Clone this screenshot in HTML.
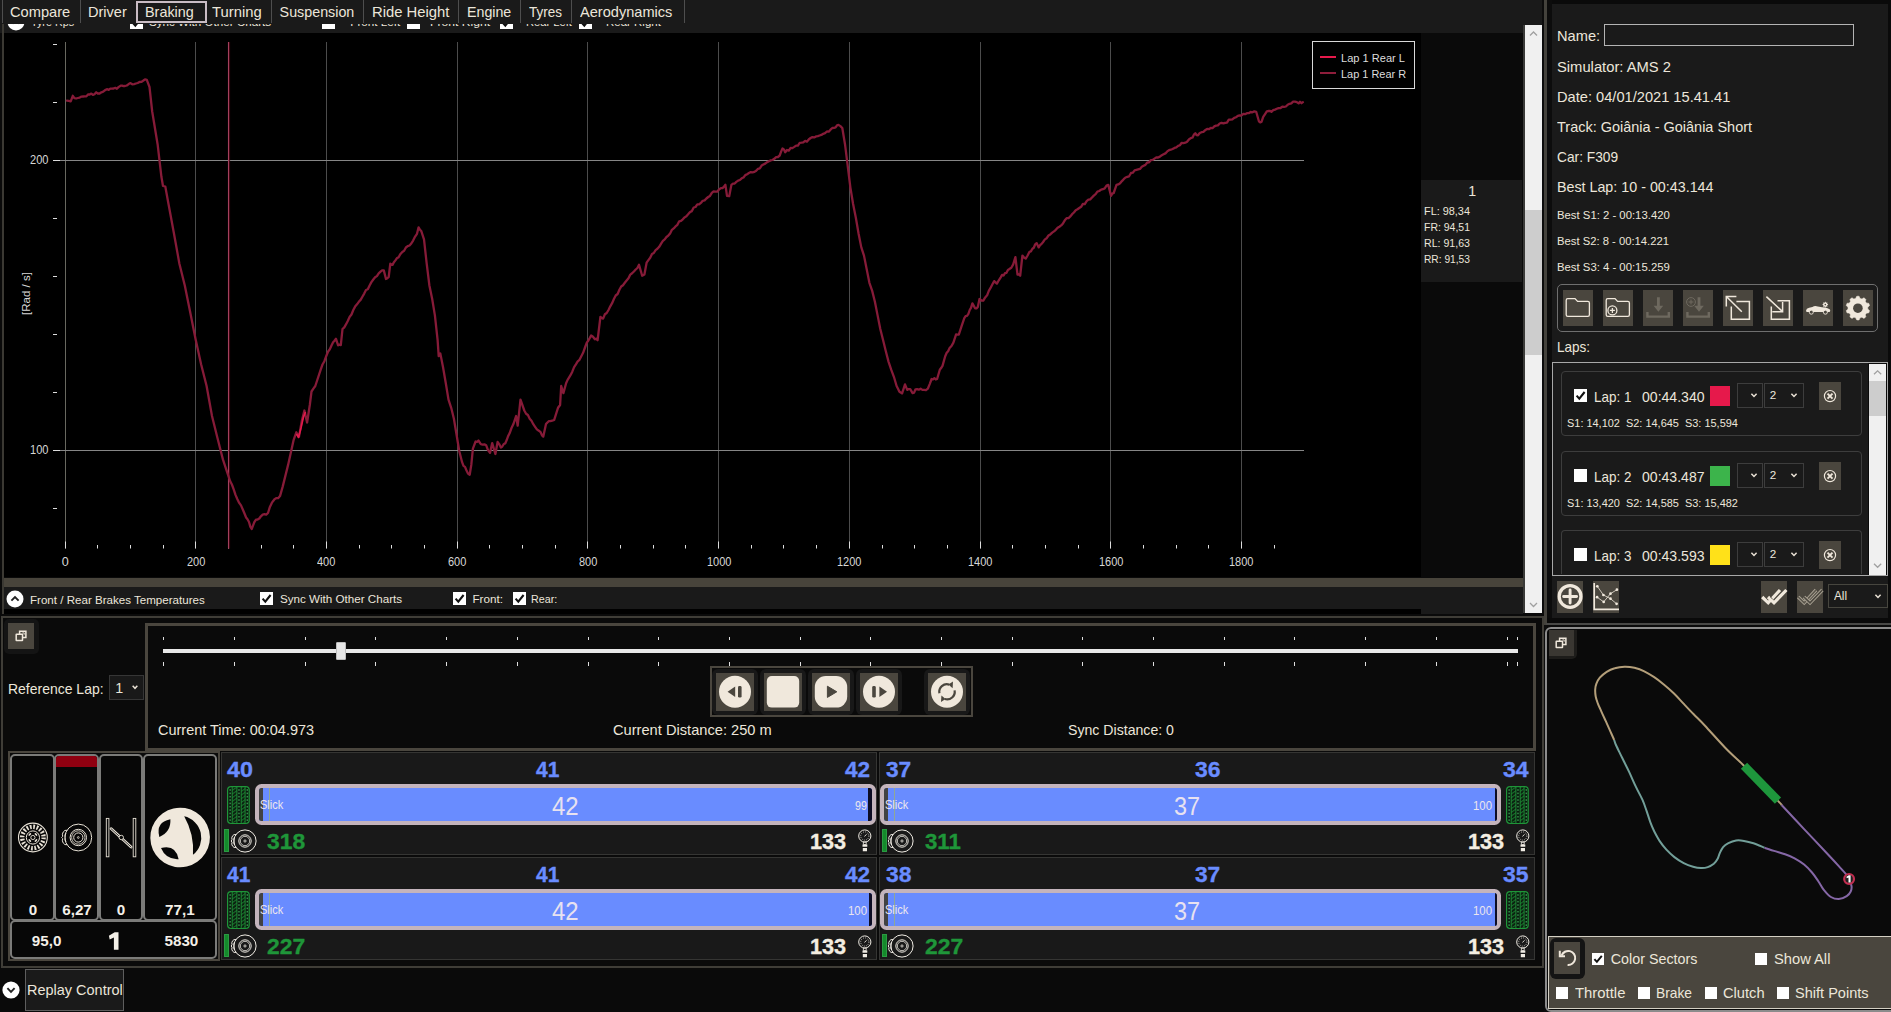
<!DOCTYPE html>
<html><head><meta charset="utf-8"><title>Telemetry</title>
<style>
html,body{margin:0;padding:0;background:#0a0a0a;}
body{width:1891px;height:1012px;position:relative;overflow:hidden;font-family:"Liberation Sans",sans-serif;}
.a{position:absolute;box-sizing:border-box;}
.t{position:absolute;white-space:pre;line-height:1;transform-origin:0 0;}
svg{overflow:visible;}
</style></head><body>
<div class="a" style="left:0.00px;top:0.00px;width:1544.00px;height:33.00px;background:#1a1a1a;"></div>
<div class="a" style="left:4.00px;top:24.30px;width:1518.00px;height:8.70px;overflow:hidden;"><div class="a" style="left:-4px;top:-1.3px"><svg class="a" style="left:5.50px;top:-11.50px;" width="20" height="20" viewBox="-10 -10 20 20"><circle cx="0" cy="0" r="8.5" fill="#fff"/><path d="M-3.6 1.6 L0 -2 L3.6 1.6" fill="none" stroke="#222" stroke-width="1.9"/></svg><span class="t" style="left:30.50px;top:-6.71px;font-size:11.70px;color:#ece6da;transform:scaleX(0.9209);">Tyre Rps</span><div class="a" style="left:129.50px;top:-7.50px;width:13.00px;height:13.00px;background:#fff;"><svg width="13" height="13" viewBox="0 0 13 13" style="position:absolute;left:0;top:0"><path d="M2.6 6.6 L5.3 9.6 L10.6 3" fill="none" stroke="#111" stroke-width="2.1"/></svg></div><span class="t" style="left:148.80px;top:-6.71px;font-size:11.70px;color:#ece6da;transform:scaleX(0.9942);">Sync With Other Charts</span><div class="a" style="left:322.30px;top:-7.50px;width:13.00px;height:13.00px;background:#fff;"></div><span class="t" style="left:350.30px;top:-6.71px;font-size:11.70px;color:#ece6da;">Front Left</span><div class="a" style="left:406.60px;top:-7.50px;width:13.00px;height:13.00px;background:#fff;"></div><span class="t" style="left:429.80px;top:-6.71px;font-size:11.70px;color:#ece6da;transform:scaleX(1.0405);">Front Right</span><div class="a" style="left:500.00px;top:-7.50px;width:13.00px;height:13.00px;background:#fff;"><svg width="13" height="13" viewBox="0 0 13 13" style="position:absolute;left:0;top:0"><path d="M2.6 6.6 L5.3 9.6 L10.6 3" fill="none" stroke="#111" stroke-width="2.1"/></svg></div><span class="t" style="left:526.00px;top:-6.71px;font-size:11.70px;color:#ece6da;transform:scaleX(0.9554);">Rear Left</span><div class="a" style="left:579.00px;top:-7.50px;width:13.00px;height:13.00px;background:#fff;"><svg width="13" height="13" viewBox="0 0 13 13" style="position:absolute;left:0;top:0"><path d="M2.6 6.6 L5.3 9.6 L10.6 3" fill="none" stroke="#111" stroke-width="2.1"/></svg></div><span class="t" style="left:605.50px;top:-6.71px;font-size:11.70px;color:#ece6da;transform:scaleX(0.9817);">Rear Right</span></div></div>
<span class="t" style="left:10.20px;top:4.99px;font-size:14.30px;color:#ece6da;transform:scaleX(1.0230);">Compare</span>
<span class="t" style="left:88.20px;top:4.99px;font-size:14.30px;color:#ece6da;transform:scaleX(1.0181);">Driver</span>
<span class="t" style="left:144.70px;top:4.99px;font-size:14.30px;color:#ece6da;transform:scaleX(1.0067);">Braking</span>
<span class="t" style="left:211.80px;top:4.99px;font-size:14.30px;color:#ece6da;transform:scaleX(1.0359);">Turning</span>
<span class="t" style="left:279.60px;top:4.99px;font-size:14.30px;color:#ece6da;">Suspension</span>
<span class="t" style="left:371.50px;top:4.99px;font-size:14.30px;color:#ece6da;transform:scaleX(1.0372);">Ride Height</span>
<span class="t" style="left:466.70px;top:4.99px;font-size:14.30px;color:#ece6da;transform:scaleX(0.9945);">Engine</span>
<span class="t" style="left:528.50px;top:4.99px;font-size:14.30px;color:#ece6da;transform:scaleX(0.9438);">Tyres</span>
<span class="t" style="left:579.60px;top:4.99px;font-size:14.30px;color:#ece6da;transform:scaleX(1.0200);">Aerodynamics</span>
<div class="a" style="left:2.30px;top:0.00px;width:1.00px;height:22.50px;background:#4e4e4e;"></div>
<div class="a" style="left:80.10px;top:0.00px;width:1.00px;height:22.50px;background:#4e4e4e;"></div>
<div class="a" style="left:271.00px;top:0.00px;width:1.00px;height:22.50px;background:#4e4e4e;"></div>
<div class="a" style="left:363.20px;top:0.00px;width:1.00px;height:22.50px;background:#4e4e4e;"></div>
<div class="a" style="left:458.00px;top:0.00px;width:1.00px;height:22.50px;background:#4e4e4e;"></div>
<div class="a" style="left:519.50px;top:0.00px;width:1.00px;height:22.50px;background:#4e4e4e;"></div>
<div class="a" style="left:571.00px;top:0.00px;width:1.00px;height:22.50px;background:#4e4e4e;"></div>
<div class="a" style="left:683.90px;top:0.00px;width:1.00px;height:22.50px;background:#4e4e4e;"></div>
<div class="a" style="left:136.00px;top:0.50px;width:70.50px;height:22.00px;border:2px solid #c9bcc4;box-sizing:border-box;"></div>
<div class="a" style="left:2.00px;top:24.00px;width:2.20px;height:592.00px;background:#3b3933;"></div>
<div class="a" style="left:1522.80px;top:25.00px;width:2.00px;height:588.00px;background:#3a3a38;"></div>
<div class="a" style="left:1524.80px;top:25.00px;width:17.20px;height:588.00px;background:#f0f0f0;"></div>
<div class="a" style="left:1524.80px;top:210.00px;width:17.20px;height:145.00px;background:#cdcdcd;"></div>
<svg class="a" style="left:1525.00px;top:25.00px;" width="17" height="17" viewBox="0 0 17 17"><path d="M5 10.5 L8.5 7 L12 10.5" fill="none" stroke="#a0a0a0" stroke-width="1.3"/></svg>
<svg class="a" style="left:1525.00px;top:596.00px;" width="17" height="17" viewBox="0 0 17 17"><path d="M5 7 L8.5 10.5 L12 7" fill="none" stroke="#a0a0a0" stroke-width="1.3"/></svg>
<div class="a" style="left:4.00px;top:577.60px;width:1519.00px;height:9.40px;background:#48443b;"></div>
<div class="a" style="left:4.00px;top:587.00px;width:1519.00px;height:22.00px;background:#1a1a1a;"></div>
<div class="a" style="left:4.00px;top:609.00px;width:1417.30px;height:4.50px;background:#000;"></div>
<div class="a" style="left:1421.30px;top:609.00px;width:102.00px;height:4.50px;background:#1a1a1a;"></div>
<svg class="a" style="left:5.40px;top:588.70px;" width="20" height="20" viewBox="-10 -10 20 20"><circle cx="0" cy="0" r="8.5" fill="#fff"/><path d="M-3.6 1.6 L0 -2 L3.6 1.6" fill="none" stroke="#222" stroke-width="1.9"/></svg>
<span class="t" style="left:29.50px;top:593.69px;font-size:11.70px;color:#ece6da;transform:scaleX(0.9900);">Front / Rear Brakes Temperatures</span>
<div class="a" style="left:260.40px;top:592.20px;width:13.00px;height:13.00px;background:#fff;"><svg width="13" height="13" viewBox="0 0 13 13" style="position:absolute;left:0;top:0"><path d="M2.6 6.6 L5.3 9.6 L10.6 3" fill="none" stroke="#111" stroke-width="2.1"/></svg></div>
<span class="t" style="left:279.80px;top:592.89px;font-size:11.70px;color:#ece6da;transform:scaleX(0.9942);">Sync With Other Charts</span>
<div class="a" style="left:453.40px;top:592.20px;width:13.00px;height:13.00px;background:#fff;"><svg width="13" height="13" viewBox="0 0 13 13" style="position:absolute;left:0;top:0"><path d="M2.6 6.6 L5.3 9.6 L10.6 3" fill="none" stroke="#111" stroke-width="2.1"/></svg></div>
<span class="t" style="left:472.40px;top:592.89px;font-size:11.70px;color:#ece6da;">Front:</span>
<div class="a" style="left:512.60px;top:592.20px;width:13.00px;height:13.00px;background:#fff;"><svg width="13" height="13" viewBox="0 0 13 13" style="position:absolute;left:0;top:0"><path d="M2.6 6.6 L5.3 9.6 L10.6 3" fill="none" stroke="#111" stroke-width="2.1"/></svg></div>
<span class="t" style="left:531.40px;top:592.89px;font-size:11.70px;color:#ece6da;transform:scaleX(0.9159);">Rear:</span>
<div class="a" style="left:1542.00px;top:0.00px;width:10.00px;height:1012.00px;background:#0c0c0c;"></div>
<div class="a" style="left:1544.40px;top:0.00px;width:2.60px;height:625.00px;background:#44423c;"></div>
<div class="a" style="left:4.00px;top:33.00px;width:1417.30px;height:544.00px;background:#000;"></div>
<div class="a" style="left:1421.30px;top:33.00px;width:102.00px;height:544.00px;background:#0a0a0a;"></div>
<div class="a" style="left:1421.30px;top:180.00px;width:101.00px;height:102.00px;background:#1a1a1a;"></div>
<span class="t" style="left:1468.36px;top:184.28px;font-size:14.20px;color:#ece6da;">1</span>
<span class="t" style="left:1423.60px;top:205.29px;font-size:11.70px;color:#ece6da;transform:scaleX(0.9306);">FL: 98,34</span>
<span class="t" style="left:1423.60px;top:221.29px;font-size:11.70px;color:#ece6da;transform:scaleX(0.8956);">FR: 94,51</span>
<span class="t" style="left:1423.60px;top:237.29px;font-size:11.70px;color:#ece6da;transform:scaleX(0.9069);">RL: 91,63</span>
<span class="t" style="left:1423.60px;top:253.29px;font-size:11.70px;color:#ece6da;transform:scaleX(0.8727);">RR: 91,53</span>
<svg class="a" style="left:0.00px;top:0.00px;" width="1430" height="580" viewBox="0 0 1430 580"><line x1="65.5" y1="42" x2="65.5" y2="548.5" stroke="#68685f" stroke-width="1"/><line x1="195.5" y1="42" x2="195.5" y2="548.5" stroke="#4c4c4c" stroke-width="1"/><line x1="326.5" y1="42" x2="326.5" y2="548.5" stroke="#4c4c4c" stroke-width="1"/><line x1="457.5" y1="42" x2="457.5" y2="548.5" stroke="#4c4c4c" stroke-width="1"/><line x1="587.5" y1="42" x2="587.5" y2="548.5" stroke="#4c4c4c" stroke-width="1"/><line x1="718.5" y1="42" x2="718.5" y2="548.5" stroke="#4c4c4c" stroke-width="1"/><line x1="849.5" y1="42" x2="849.5" y2="548.5" stroke="#4c4c4c" stroke-width="1"/><line x1="980.5" y1="42" x2="980.5" y2="548.5" stroke="#4c4c4c" stroke-width="1"/><line x1="1110.5" y1="42" x2="1110.5" y2="548.5" stroke="#4c4c4c" stroke-width="1"/><line x1="1241.5" y1="42" x2="1241.5" y2="548.5" stroke="#4c4c4c" stroke-width="1"/><line x1="97.5" y1="545" x2="97.5" y2="548.5" stroke="#ddd" stroke-width="1"/><line x1="130.5" y1="545" x2="130.5" y2="548.5" stroke="#ddd" stroke-width="1"/><line x1="163.5" y1="545" x2="163.5" y2="548.5" stroke="#ddd" stroke-width="1"/><line x1="228.5" y1="545" x2="228.5" y2="548.5" stroke="#ddd" stroke-width="1"/><line x1="261.5" y1="545" x2="261.5" y2="548.5" stroke="#ddd" stroke-width="1"/><line x1="293.5" y1="545" x2="293.5" y2="548.5" stroke="#ddd" stroke-width="1"/><line x1="359.5" y1="545" x2="359.5" y2="548.5" stroke="#ddd" stroke-width="1"/><line x1="391.5" y1="545" x2="391.5" y2="548.5" stroke="#ddd" stroke-width="1"/><line x1="424.5" y1="545" x2="424.5" y2="548.5" stroke="#ddd" stroke-width="1"/><line x1="489.5" y1="545" x2="489.5" y2="548.5" stroke="#ddd" stroke-width="1"/><line x1="522.5" y1="545" x2="522.5" y2="548.5" stroke="#ddd" stroke-width="1"/><line x1="555.5" y1="545" x2="555.5" y2="548.5" stroke="#ddd" stroke-width="1"/><line x1="620.5" y1="545" x2="620.5" y2="548.5" stroke="#ddd" stroke-width="1"/><line x1="653.5" y1="545" x2="653.5" y2="548.5" stroke="#ddd" stroke-width="1"/><line x1="685.5" y1="545" x2="685.5" y2="548.5" stroke="#ddd" stroke-width="1"/><line x1="751.5" y1="545" x2="751.5" y2="548.5" stroke="#ddd" stroke-width="1"/><line x1="783.5" y1="545" x2="783.5" y2="548.5" stroke="#ddd" stroke-width="1"/><line x1="816.5" y1="545" x2="816.5" y2="548.5" stroke="#ddd" stroke-width="1"/><line x1="882.5" y1="545" x2="882.5" y2="548.5" stroke="#ddd" stroke-width="1"/><line x1="914.5" y1="545" x2="914.5" y2="548.5" stroke="#ddd" stroke-width="1"/><line x1="947.5" y1="545" x2="947.5" y2="548.5" stroke="#ddd" stroke-width="1"/><line x1="1012.5" y1="545" x2="1012.5" y2="548.5" stroke="#ddd" stroke-width="1"/><line x1="1045.5" y1="545" x2="1045.5" y2="548.5" stroke="#ddd" stroke-width="1"/><line x1="1078.5" y1="545" x2="1078.5" y2="548.5" stroke="#ddd" stroke-width="1"/><line x1="1143.5" y1="545" x2="1143.5" y2="548.5" stroke="#ddd" stroke-width="1"/><line x1="1176.5" y1="545" x2="1176.5" y2="548.5" stroke="#ddd" stroke-width="1"/><line x1="1208.5" y1="545" x2="1208.5" y2="548.5" stroke="#ddd" stroke-width="1"/><line x1="1274.5" y1="545" x2="1274.5" y2="548.5" stroke="#ddd" stroke-width="1"/><line x1="65.5" y1="541.5" x2="65.5" y2="548.5" stroke="#ddd" stroke-width="1"/><line x1="195.5" y1="541.5" x2="195.5" y2="548.5" stroke="#ddd" stroke-width="1"/><line x1="326.5" y1="541.5" x2="326.5" y2="548.5" stroke="#ddd" stroke-width="1"/><line x1="457.5" y1="541.5" x2="457.5" y2="548.5" stroke="#ddd" stroke-width="1"/><line x1="587.5" y1="541.5" x2="587.5" y2="548.5" stroke="#ddd" stroke-width="1"/><line x1="718.5" y1="541.5" x2="718.5" y2="548.5" stroke="#ddd" stroke-width="1"/><line x1="849.5" y1="541.5" x2="849.5" y2="548.5" stroke="#ddd" stroke-width="1"/><line x1="980.5" y1="541.5" x2="980.5" y2="548.5" stroke="#ddd" stroke-width="1"/><line x1="1110.5" y1="541.5" x2="1110.5" y2="548.5" stroke="#ddd" stroke-width="1"/><line x1="1241.5" y1="541.5" x2="1241.5" y2="548.5" stroke="#ddd" stroke-width="1"/><line x1="53" y1="450.5" x2="1304" y2="450.5" stroke="#868686" stroke-width="1"/><line x1="53" y1="450.5" x2="60" y2="450.5" stroke="#ddd" stroke-width="1"/><line x1="53" y1="160.5" x2="1304" y2="160.5" stroke="#868686" stroke-width="1"/><line x1="53" y1="160.5" x2="60" y2="160.5" stroke="#ddd" stroke-width="1"/><line x1="53" y1="508.5" x2="57" y2="508.5" stroke="#ddd" stroke-width="1"/><line x1="53" y1="392.5" x2="57" y2="392.5" stroke="#ddd" stroke-width="1"/><line x1="53" y1="334.5" x2="57" y2="334.5" stroke="#ddd" stroke-width="1"/><line x1="53" y1="276.5" x2="57" y2="276.5" stroke="#ddd" stroke-width="1"/><line x1="53" y1="218.5" x2="57" y2="218.5" stroke="#ddd" stroke-width="1"/><line x1="53" y1="102.5" x2="57" y2="102.5" stroke="#ddd" stroke-width="1"/><line x1="53" y1="44.5" x2="57" y2="44.5" stroke="#ddd" stroke-width="1"/><line x1="228.6" y1="42" x2="228.6" y2="548.5" stroke="#a3405e" stroke-width="1.3"/><line x1="229.6" y1="42" x2="229.6" y2="548.5" stroke="#48000e" stroke-width="0.8"/><polyline points="66.9,100.7 68.8,100.8 70.7,101.3 72.8,95.8 74.4,98.1 76.1,98.5 77.9,98.0 79.7,97.6 81.5,96.6 83.1,96.5 84.8,96.4 86.4,96.4 88.0,94.4 89.7,94.5 91.3,93.6 92.9,94.9 94.5,94.2 96.2,92.3 97.8,93.5 99.6,93.5 101.4,92.3 103.2,91.7 105.1,90.1 106.9,89.2 108.7,89.8 110.3,88.6 112.0,88.6 113.6,88.5 115.3,87.8 116.9,88.7 118.8,86.9 120.7,85.7 122.1,85.6 123.6,86.1 125.0,86.0 126.8,85.5 128.7,84.1 130.5,83.1 132.3,84.3 134.1,84.1 135.9,83.5 137.7,83.0 139.5,82.0 141.3,81.9 143.1,80.8 145.0,79.4 146.8,79.8 149.5,87.0 152.2,111.5 157.6,144.2 161.4,176.8 163.0,186.0 165.3,186.5 168.5,204.0 174.0,233.8 179.4,263.7 184.8,285.5 190.3,312.7 195.7,339.8 201.1,364.3 206.6,386.0 212.0,416.0 217.4,437.7 222.9,459.4 228.3,475.7 230.1,481.0 231.9,484.5 233.7,489.3 235.5,494.9 237.4,499.2 239.2,502.9 241.0,505.4 242.8,509.5 244.6,513.8 246.1,517.5 247.5,519.2 249.0,522.0 250.3,526.6 251.7,529.0 253.1,525.3 254.4,522.0 256.0,519.6 257.6,519.5 259.3,518.5 260.9,516.3 262.7,514.6 264.4,514.2 266.2,514.7 268.0,513.0 269.9,506.9 271.8,502.9 273.2,500.9 274.7,499.1 276.1,498.2 278.1,498.2 280.0,496.1 282.7,486.6 288.1,464.9 293.5,440.4 296.3,432.3 297.6,434.6 299.0,436.6 301.7,421.4 304.4,410.5 307.1,422.5 309.8,405.0 311.5,391.5 313.4,388.6 315.3,386.0 320.7,369.7 322.5,364.5 324.4,361.2 326.2,356.2 328.0,351.7 329.8,349.3 331.6,345.3 333.1,342.3 334.5,340.8 336.0,338.8 338.1,345.3 339.5,344.6 340.8,345.1 342.5,329.0 344.3,327.3 346.1,324.2 347.9,320.8 349.7,316.7 351.5,314.5 353.3,310.0 355.1,306.6 357.0,304.3 358.8,301.8 360.6,299.9 362.4,296.7 364.2,293.6 366.0,290.0 367.8,289.3 369.6,285.5 371.4,282.1 373.3,279.5 375.1,277.3 376.9,276.1 378.7,273.3 380.5,271.7 382.1,270.4 383.8,270.4 386.0,279.0 387.4,278.3 388.7,277.0 390.3,263.7 392.5,264.9 393.9,262.3 395.4,260.4 396.8,258.3 398.6,257.2 400.5,253.9 402.3,251.9 404.1,250.8 405.9,247.5 407.7,246.1 409.5,245.5 411.3,243.5 413.1,240.6 415.1,236.6 417.0,233.8 418.6,227.3 420.0,229.8 421.3,231.1 424.0,239.3 426.7,263.7 429.4,285.5 432.2,299.0 434.9,315.4 437.6,339.8 438.7,356.2 440.3,353.4 443.0,367.0 445.8,383.3 448.5,399.6 451.2,407.8 453.9,418.7 456.6,435.0 459.3,451.3 462.1,462.2 463.5,465.9 465.0,466.9 466.4,470.3 468.0,473.5 469.7,474.7 471.3,464.9 472.9,448.6 475.6,441.5 477.0,441.8 478.4,440.5 480.8,444.2 482.6,444.6 484.4,444.4 486.2,445.3 488.1,450.4 490.0,452.9 492.2,443.1 495.4,454.0 497.6,442.0 499.2,444.1 500.9,447.5 502.3,446.5 503.8,444.0 505.2,443.4 506.7,440.1 508.1,436.1 509.6,433.3 511.5,428.0 513.4,424.1 516.1,416.0 517.7,425.7 520.5,399.6 524.3,410.5 526.1,413.7 527.9,415.0 529.7,418.7 531.5,420.8 533.3,424.2 535.1,426.8 536.9,429.4 538.8,430.7 540.6,432.1 542.0,435.4 543.3,436.6 546.0,424.1 547.4,422.5 548.9,421.2 550.3,421.2 552.2,420.7 554.2,419.9 558.0,407.8 560.1,405.0 561.2,386.0 563.4,393.1 566.1,383.3 567.6,379.9 569.0,377.6 570.5,375.2 572.3,371.7 574.1,367.1 575.9,364.3 577.7,361.3 579.5,359.8 581.3,356.2 583.1,352.8 585.0,347.5 586.8,342.6 588.2,340.7 589.7,338.1 591.1,335.5 593.0,336.8 594.9,339.3 596.2,338.7 597.6,340.2 600.4,317.0 601.8,318.0 603.1,318.6 604.9,314.3 606.7,313.0 608.5,310.0 610.3,306.3 612.1,303.2 613.9,299.0 615.7,295.5 617.6,294.0 619.4,289.8 621.2,286.5 623.0,285.2 624.8,282.8 626.6,280.6 628.5,278.3 630.3,274.6 632.1,273.3 633.9,271.5 635.7,269.5 637.4,268.0 639.0,264.8 642.2,275.7 644.4,274.5 646.6,262.7 648.4,260.2 650.2,257.8 652.0,254.0 653.8,253.0 655.6,250.1 657.4,248.8 659.2,246.8 661.1,243.6 662.9,240.9 664.7,239.4 666.5,237.0 668.3,235.6 670.1,233.4 671.9,229.8 673.7,228.4 675.5,226.4 677.4,224.8 679.2,221.3 681.0,220.9 682.8,219.3 684.6,217.4 686.4,216.2 688.3,214.1 690.1,212.0 691.9,211.1 693.7,207.5 695.5,207.0 697.3,204.4 699.1,204.4 700.9,202.9 702.7,200.8 704.6,200.4 706.4,198.5 708.2,197.0 710.0,195.9 711.8,192.9 713.6,191.4 715.4,191.6 717.2,191.7 719.0,189.5 720.9,188.1 722.7,188.0 724.0,186.6 725.4,184.8 727.0,195.8 729.2,196.2 731.4,184.9 733.0,183.6 734.7,183.5 736.3,181.9 738.1,180.6 739.9,180.0 741.7,178.3 743.5,177.5 745.3,175.1 747.1,174.2 748.9,173.1 750.8,172.1 752.6,172.4 754.4,171.9 756.2,170.7 758.0,168.8 759.8,168.4 761.6,165.6 763.4,164.5 765.2,163.6 767.1,162.1 768.9,161.2 770.7,160.4 772.5,160.0 774.3,158.8 776.1,157.1 777.9,157.0 779.7,155.5 781.1,151.6 782.5,148.5 783.9,149.4 785.2,152.3 787.0,150.0 788.8,150.6 790.6,148.0 792.4,148.1 794.3,146.9 796.1,145.6 797.9,145.6 799.7,142.9 801.5,142.7 803.3,142.4 805.1,140.9 806.9,141.7 808.7,139.5 810.6,138.0 812.4,137.1 814.2,137.4 816.0,136.4 817.8,136.1 819.6,135.5 821.4,134.9 823.2,133.8 825.0,133.2 826.9,131.5 828.7,131.7 830.5,129.7 832.3,128.0 834.1,127.8 835.6,127.4 837.0,125.3 838.5,124.9 840.4,126.1 842.3,128.0 845.0,144.2 847.7,165.9 850.4,187.6 853.1,204.0 855.8,217.5 858.6,233.8 861.3,247.4 864.0,255.6 866.7,269.2 869.4,282.8 872.2,290.9 874.9,301.8 877.6,315.4 880.3,329.0 883.0,339.8 885.7,350.7 888.5,361.6 891.2,369.7 893.9,376.8 896.6,386.0 898.0,388.8 899.3,391.5 900.7,392.6 902.1,393.4 905.0,384.4 907.2,389.9 908.7,389.1 910.2,389.1 912.6,393.1 914.1,392.6 915.5,389.3 917.0,389.2 918.8,389.7 920.6,388.7 922.4,389.9 924.2,389.8 926.0,390.1 927.8,388.7 929.7,384.1 931.6,379.0 933.0,379.3 934.4,378.2 935.8,379.5 937.1,379.0 939.8,369.7 941.1,368.1 942.5,365.9 945.2,356.2 946.7,352.8 948.1,351.2 949.6,348.0 951.5,346.0 953.4,342.6 956.1,334.4 957.5,334.7 958.8,334.6 961.5,326.3 964.3,318.1 965.6,316.1 967.0,315.8 968.4,313.8 969.7,310.0 971.0,307.8 972.4,303.4 973.8,305.9 975.1,308.3 976.5,308.4 977.8,307.0 979.5,299.0 981.4,300.5 983.3,300.6 985.2,297.4 987.1,295.3 988.8,290.8 990.4,288.2 992.3,284.5 994.2,281.1 995.5,282.3 996.9,283.6 998.8,280.3 1000.7,277.3 1002.1,274.9 1003.6,275.5 1005.0,273.1 1006.5,272.8 1007.9,269.9 1009.4,269.0 1011.3,267.7 1013.2,264.4 1015.4,257.2 1017.5,274.6 1018.9,274.3 1020.2,275.7 1022.4,255.6 1024.0,257.5 1025.7,258.6 1027.6,255.5 1029.5,251.8 1030.9,251.4 1032.4,248.8 1033.8,247.8 1035.2,244.3 1036.6,243.1 1038.7,247.4 1040.2,245.0 1041.6,243.9 1043.1,242.0 1044.9,239.4 1046.7,238.2 1048.5,235.5 1050.3,234.4 1052.2,232.6 1054.0,231.4 1055.8,229.8 1057.6,227.8 1059.4,226.7 1061.2,225.4 1063.0,223.4 1064.8,220.3 1066.6,218.2 1068.5,218.2 1070.3,216.4 1072.1,214.2 1073.9,212.5 1075.7,210.2 1077.5,209.3 1079.3,208.0 1081.1,206.8 1082.9,203.8 1084.8,204.1 1086.6,201.2 1088.4,199.7 1090.2,199.4 1092.0,197.5 1093.8,195.6 1095.6,194.2 1097.4,191.6 1099.2,191.0 1101.1,189.6 1102.9,189.2 1104.7,188.4 1106.5,185.6 1108.3,184.9 1111.0,195.8 1112.3,193.6 1113.7,193.0 1116.5,184.9 1118.3,184.4 1120.1,183.3 1121.9,181.1 1123.7,179.2 1125.5,177.5 1127.3,176.9 1129.1,176.3 1131.0,173.0 1132.8,172.7 1134.6,170.4 1136.4,169.9 1138.2,169.4 1140.0,168.9 1141.8,166.8 1143.6,165.8 1145.4,164.9 1147.3,162.5 1149.1,162.3 1150.9,160.1 1152.7,159.9 1154.5,158.6 1156.3,157.4 1158.1,157.5 1159.9,156.6 1161.7,155.3 1163.6,154.3 1165.4,153.4 1167.2,151.4 1169.0,150.2 1170.8,149.7 1172.6,149.0 1174.5,147.9 1176.3,147.3 1178.1,145.9 1179.9,145.2 1181.7,142.8 1183.5,143.1 1185.3,142.7 1187.1,141.8 1188.9,139.5 1190.8,138.1 1192.6,137.5 1193.9,134.6 1195.3,133.3 1196.7,135.2 1198.0,135.3 1199.8,133.0 1201.6,132.2 1203.4,131.9 1205.2,130.2 1207.1,128.9 1208.9,129.2 1210.7,128.0 1212.5,128.2 1214.3,126.4 1216.1,125.6 1217.9,125.4 1219.7,123.5 1221.5,122.8 1223.4,123.4 1225.2,122.8 1227.0,122.6 1228.8,119.7 1230.6,119.7 1232.4,119.4 1234.2,117.9 1236.0,117.2 1237.8,115.9 1239.7,115.3 1241.5,115.5 1243.3,113.9 1245.1,114.2 1246.9,113.2 1248.7,113.2 1250.6,112.0 1252.4,112.3 1254.3,111.4 1256.2,111.8 1258.9,121.3 1260.2,122.4 1261.6,121.7 1263.2,116.9 1264.9,114.3 1266.8,111.4 1268.7,111.0 1270.1,110.9 1271.4,111.8 1273.2,110.2 1275.0,109.6 1276.8,108.8 1278.6,108.1 1280.5,108.0 1282.3,106.7 1284.1,106.9 1285.9,106.5 1287.7,104.7 1289.5,103.8 1291.3,103.4 1293.1,101.7 1294.9,101.6 1296.8,102.1 1298.6,103.4 1300.0,101.8 1301.5,103.2 1302.9,102.1" fill="none" stroke="#861b38" stroke-width="2.3" stroke-linejoin="round" stroke-linecap="round"/><polyline points="296.5,434 298.5,437.5 301,428 303.5,417 305.5,412" fill="none" stroke="#e6194b" stroke-width="1.6" stroke-linejoin="round"/></svg>
<span class="t" style="left:61.70px;top:555.63px;font-size:12.60px;color:#d6d6d6;">0</span>
<span class="t" style="left:186.72px;top:555.63px;font-size:12.60px;color:#d6d6d6;transform:scaleX(0.8744);">200</span>
<span class="t" style="left:317.44px;top:555.63px;font-size:12.60px;color:#d6d6d6;transform:scaleX(0.8744);">400</span>
<span class="t" style="left:448.16px;top:555.63px;font-size:12.60px;color:#d6d6d6;transform:scaleX(0.8744);">600</span>
<span class="t" style="left:578.88px;top:555.63px;font-size:12.60px;color:#d6d6d6;transform:scaleX(0.8744);">800</span>
<span class="t" style="left:706.55px;top:555.63px;font-size:12.60px;color:#d6d6d6;transform:scaleX(0.8739);">1000</span>
<span class="t" style="left:837.27px;top:555.63px;font-size:12.60px;color:#d6d6d6;transform:scaleX(0.8739);">1200</span>
<span class="t" style="left:967.99px;top:555.63px;font-size:12.60px;color:#d6d6d6;transform:scaleX(0.8739);">1400</span>
<span class="t" style="left:1098.71px;top:555.63px;font-size:12.60px;color:#d6d6d6;transform:scaleX(0.8739);">1600</span>
<span class="t" style="left:1229.43px;top:555.63px;font-size:12.60px;color:#d6d6d6;transform:scaleX(0.8739);">1800</span>
<span class="t" style="left:29.80px;top:154.33px;font-size:12.60px;color:#d6d6d6;transform:scaleX(0.8792);">200</span>
<span class="t" style="left:29.80px;top:444.33px;font-size:12.60px;color:#d6d6d6;transform:scaleX(0.8792);">100</span>
<span class="t" style="left:20.5px;top:314.5px;font-size:11.5px;color:#d8d8d8;transform:rotate(-90deg);transform-origin:0 0;">[Rad / s]</span>
<div class="a" style="left:1312.00px;top:41.00px;width:101.00px;height:46.00px;border:1px solid #d8d8d8;background:#000;box-sizing:content-box;"></div>
<div class="a" style="left:1320.00px;top:56.00px;width:15.50px;height:2.00px;background:#e6194b;"></div>
<div class="a" style="left:1320.00px;top:72.30px;width:15.50px;height:2.00px;background:#8e1d3b;"></div>
<span class="t" style="left:1340.80px;top:52.09px;font-size:11.70px;color:#ddd;transform:scaleX(0.9464);">Lap 1 Rear L</span>
<span class="t" style="left:1340.80px;top:68.29px;font-size:11.70px;color:#ddd;transform:scaleX(0.9366);">Lap 1 Rear R</span>
<div class="a" style="left:1552.00px;top:4.00px;width:336.00px;height:613.80px;background:#1a1a1a;"></div>
<span class="t" style="left:1556.90px;top:28.89px;font-size:14.30px;color:#ece6da;transform:scaleX(1.0234);">Name:</span>
<div class="a" style="left:1604.00px;top:23.80px;width:250.00px;height:22.00px;border:1px solid #b4b4b4;box-sizing:border-box;"></div>
<span class="t" style="left:1556.90px;top:59.89px;font-size:14.30px;color:#ece6da;transform:scaleX(1.0320);">Simulator: AMS 2</span>
<span class="t" style="left:1556.90px;top:89.59px;font-size:14.30px;color:#ece6da;transform:scaleX(1.0237);">Date: 04/01/2021 15.41.41</span>
<span class="t" style="left:1556.90px;top:119.89px;font-size:14.30px;color:#ece6da;transform:scaleX(1.0129);">Track: Goiânia - Goiânia Short</span>
<span class="t" style="left:1556.90px;top:150.19px;font-size:14.30px;color:#ece6da;transform:scaleX(0.9612);">Car: F309</span>
<span class="t" style="left:1556.90px;top:180.29px;font-size:14.30px;color:#ece6da;">Best Lap: 10 - 00:43.144</span>
<span class="t" style="left:1556.90px;top:208.89px;font-size:11.70px;color:#ece6da;transform:scaleX(0.9698);">Best S1: 2 - 00:13.420</span>
<span class="t" style="left:1556.90px;top:234.99px;font-size:11.70px;color:#ece6da;transform:scaleX(0.9629);">Best S2: 8 - 00:14.221</span>
<span class="t" style="left:1556.90px;top:261.29px;font-size:11.70px;color:#ece6da;transform:scaleX(0.9698);">Best S3: 4 - 00:15.259</span>
<div class="a" style="left:1556.70px;top:284.00px;width:321.30px;height:47.80px;border:1px solid #6f6f6f;border-radius:5px;box-sizing:border-box;"></div>
<div class="a" style="left:1563.00px;top:290.00px;width:30.00px;height:35.60px;background:#4a463e;"></div>
<div class="a" style="left:1603.00px;top:290.00px;width:30.00px;height:35.60px;background:#4a463e;"></div>
<div class="a" style="left:1643.00px;top:290.00px;width:30.00px;height:35.60px;background:#4a463e;"></div>
<div class="a" style="left:1683.00px;top:290.00px;width:30.00px;height:35.60px;background:#4a463e;"></div>
<div class="a" style="left:1723.00px;top:290.00px;width:30.00px;height:35.60px;background:#4a463e;"></div>
<div class="a" style="left:1763.00px;top:290.00px;width:30.00px;height:35.60px;background:#4a463e;"></div>
<div class="a" style="left:1803.00px;top:290.00px;width:30.00px;height:35.60px;background:#4a463e;"></div>
<div class="a" style="left:1843.00px;top:290.00px;width:30.00px;height:35.60px;background:#4a463e;"></div>
<svg class="a" style="left:1552.00px;top:284.00px;" width="336" height="48" viewBox="1552 284 336 48"><path d="M1567.8 298.6 h7.2 l2.6 2.8 h10.2 q1.6 0 1.6 1.6 v11.8 q0 1.6 -1.6 1.6 h-20 q-1.6 0 -1.6 -1.6 v-14.6 q0 -1.6 1.6 -1.6z" fill="none" stroke="#f0e8dc" stroke-width="1.3"/><path d="M1607.8 298.6 h7.2 l2.6 2.8 h10.2 q1.6 0 1.6 1.6 v11.8 q0 1.6 -1.6 1.6 h-20 q-1.6 0 -1.6 -1.6 v-14.6 q0 -1.6 1.6 -1.6z" fill="none" stroke="#f0e8dc" stroke-width="1.3"/><circle cx="1612.4" cy="310.4" r="4.5" fill="#4a463e" stroke="#f0e8dc" stroke-width="1.3"/><path d="M1609.9 310.4 h5 M1612.4 307.9 v5" stroke="#f0e8dc" stroke-width="1.3"/><path d="M1657 297.3 h2.8 v8.4 h3.4 l-4.8 6 l-4.8 -6 h3.4z" fill="#6e695f"/><path d="M1646.2 312 h2.4 v3.4 h19 v-3.4 h2.4 v5.8 h-23.8z" fill="#6e695f"/><path d="M1697.6 297.3 h2.8 v8.4 h3.4 l-4.8 6 l-4.8 -6 h3.4z" fill="#6e695f"/><path d="M1686.2 312 h2.4 v3.4 h19 v-3.4 h2.4 v5.8 h-23.8z" fill="#6e695f"/><circle cx="1691" cy="302" r="4.4" fill="none" stroke="#6e695f" stroke-width="1"/><path d="M1688.6 302 h4.8 M1691 299.6 v4.8" stroke="#6e695f" stroke-width="1"/><path d="M1736.4 301.6 H1749.4 V319.2 H1731.3 V306.4" fill="none" stroke="#f0e8dc" stroke-width="1.5"/><path d="M1741.8 311.8 L1726.6 296.8 M1726.3 306.6 V296.6 H1736.4" fill="none" stroke="#f0e8dc" stroke-width="1.5"/><path d="M1777.5 300.8 H1789.4 V319.2 H1771.3 V306.5" fill="none" stroke="#f0e8dc" stroke-width="1.5"/><path d="M1766.4 296.6 L1782.3 311.4 M1782.6 302 V311.7 H1772.3" fill="none" stroke="#f0e8dc" stroke-width="1.5"/><path d="M1806 310.8 Q1806.2 308.4 1809.2 307.7 L1812.4 306.9 Q1815 305.5 1817.8 306.6 L1822 307.3 Q1827.8 307.8 1829.9 309.6 Q1830.8 310.9 1829.6 312 H1806.6z" fill="#f0e8dc"/><circle cx="1811.3" cy="312.2" r="2" fill="#4a463e" stroke="#f0e8dc" stroke-width="0.9"/><circle cx="1825.4" cy="312.2" r="2" fill="#4a463e" stroke="#f0e8dc" stroke-width="0.9"/><path d="M1828.09 304.60 L1828.09 304.67 L1828.09 304.75 L1828.08 304.82 L1828.06 304.89 L1828.02 304.96 L1827.94 305.02 L1827.79 305.06 L1827.61 305.09 L1827.47 305.12 L1827.38 305.16 L1827.34 305.20 L1827.31 305.25 L1827.29 305.30 L1827.27 305.35 L1827.25 305.41 L1827.22 305.46 L1827.20 305.51 L1827.18 305.56 L1827.17 305.61 L1827.17 305.68 L1827.20 305.76 L1827.28 305.89 L1827.39 306.04 L1827.46 306.17 L1827.48 306.27 L1827.45 306.35 L1827.42 306.41 L1827.37 306.47 L1827.33 306.52 L1827.28 306.58 L1827.22 306.63 L1827.17 306.67 L1827.11 306.72 L1827.05 306.75 L1826.97 306.78 L1826.87 306.76 L1826.74 306.69 L1826.59 306.58 L1826.46 306.50 L1826.38 306.47 L1826.31 306.47 L1826.26 306.48 L1826.21 306.50 L1826.16 306.52 L1826.11 306.55 L1826.05 306.57 L1826.00 306.59 L1825.95 306.61 L1825.90 306.64 L1825.86 306.68 L1825.82 306.77 L1825.79 306.91 L1825.76 307.09 L1825.72 307.24 L1825.66 307.32 L1825.59 307.36 L1825.52 307.38 L1825.45 307.39 L1825.37 307.39 L1825.30 307.39 L1825.23 307.39 L1825.15 307.39 L1825.08 307.38 L1825.01 307.36 L1824.94 307.32 L1824.88 307.24 L1824.84 307.09 L1824.81 306.91 L1824.78 306.77 L1824.74 306.68 L1824.70 306.64 L1824.65 306.61 L1824.60 306.59 L1824.55 306.57 L1824.49 306.55 L1824.44 306.52 L1824.39 306.50 L1824.34 306.48 L1824.29 306.47 L1824.22 306.47 L1824.14 306.50 L1824.01 306.58 L1823.86 306.69 L1823.73 306.76 L1823.63 306.78 L1823.55 306.75 L1823.49 306.72 L1823.43 306.67 L1823.38 306.63 L1823.32 306.58 L1823.27 306.52 L1823.23 306.47 L1823.18 306.41 L1823.15 306.35 L1823.12 306.27 L1823.14 306.17 L1823.21 306.04 L1823.32 305.89 L1823.40 305.76 L1823.43 305.68 L1823.43 305.61 L1823.42 305.56 L1823.40 305.51 L1823.38 305.46 L1823.35 305.41 L1823.33 305.35 L1823.31 305.30 L1823.29 305.25 L1823.26 305.20 L1823.22 305.16 L1823.13 305.12 L1822.99 305.09 L1822.81 305.06 L1822.66 305.02 L1822.58 304.96 L1822.54 304.89 L1822.52 304.82 L1822.51 304.75 L1822.51 304.67 L1822.51 304.60 L1822.51 304.53 L1822.51 304.45 L1822.52 304.38 L1822.54 304.31 L1822.58 304.24 L1822.66 304.18 L1822.81 304.14 L1822.99 304.11 L1823.13 304.08 L1823.22 304.04 L1823.26 304.00 L1823.29 303.95 L1823.31 303.90 L1823.33 303.85 L1823.35 303.79 L1823.38 303.74 L1823.40 303.69 L1823.42 303.64 L1823.43 303.59 L1823.43 303.52 L1823.40 303.44 L1823.32 303.31 L1823.21 303.16 L1823.14 303.03 L1823.12 302.93 L1823.15 302.85 L1823.18 302.79 L1823.23 302.73 L1823.27 302.68 L1823.32 302.62 L1823.38 302.57 L1823.43 302.53 L1823.49 302.48 L1823.55 302.45 L1823.63 302.42 L1823.73 302.44 L1823.86 302.51 L1824.01 302.62 L1824.14 302.70 L1824.22 302.73 L1824.29 302.73 L1824.34 302.72 L1824.39 302.70 L1824.44 302.68 L1824.49 302.65 L1824.55 302.63 L1824.60 302.61 L1824.65 302.59 L1824.70 302.56 L1824.74 302.52 L1824.78 302.43 L1824.81 302.29 L1824.84 302.11 L1824.88 301.96 L1824.94 301.88 L1825.01 301.84 L1825.08 301.82 L1825.15 301.81 L1825.23 301.81 L1825.30 301.81 L1825.37 301.81 L1825.45 301.81 L1825.52 301.82 L1825.59 301.84 L1825.66 301.88 L1825.72 301.96 L1825.76 302.11 L1825.79 302.29 L1825.82 302.43 L1825.86 302.52 L1825.90 302.56 L1825.95 302.59 L1826.00 302.61 L1826.05 302.63 L1826.11 302.65 L1826.16 302.68 L1826.21 302.70 L1826.26 302.72 L1826.31 302.73 L1826.38 302.73 L1826.46 302.70 L1826.59 302.62 L1826.74 302.51 L1826.87 302.44 L1826.97 302.42 L1827.05 302.45 L1827.11 302.48 L1827.17 302.53 L1827.22 302.57 L1827.28 302.62 L1827.33 302.68 L1827.37 302.73 L1827.42 302.79 L1827.45 302.85 L1827.48 302.93 L1827.46 303.03 L1827.39 303.16 L1827.28 303.31 L1827.20 303.44 L1827.17 303.52 L1827.17 303.59 L1827.18 303.64 L1827.20 303.69 L1827.22 303.74 L1827.25 303.79 L1827.27 303.85 L1827.29 303.90 L1827.31 303.95 L1827.34 304.00 L1827.38 304.04 L1827.47 304.08 L1827.61 304.11 L1827.79 304.14 L1827.94 304.18 L1828.02 304.24 L1828.06 304.31 L1828.08 304.38 L1828.09 304.45 L1828.09 304.53Z" fill="#f0e8dc"/><circle cx="1825.3" cy="304.6" r="0.8" fill="#4a463e"/><path d="M1867.82 308.10 L1867.82 308.36 L1867.82 308.62 L1867.83 308.88 L1867.91 309.15 L1868.16 309.45 L1868.67 309.81 L1869.16 310.19 L1869.38 310.54 L1869.41 310.86 L1869.36 311.17 L1869.29 311.47 L1869.20 311.77 L1869.10 312.07 L1868.98 312.35 L1868.83 312.63 L1868.62 312.87 L1868.24 313.03 L1867.61 313.05 L1866.99 313.04 L1866.62 313.13 L1866.40 313.31 L1866.23 313.51 L1866.07 313.72 L1865.92 313.93 L1865.77 314.14 L1865.62 314.35 L1865.48 314.57 L1865.38 314.84 L1865.41 315.22 L1865.61 315.81 L1865.78 316.41 L1865.75 316.82 L1865.59 317.10 L1865.37 317.32 L1865.13 317.53 L1864.89 317.71 L1864.63 317.89 L1864.36 318.05 L1864.08 318.19 L1863.77 318.26 L1863.36 318.16 L1862.85 317.81 L1862.35 317.44 L1861.99 317.30 L1861.71 317.31 L1861.46 317.37 L1861.21 317.45 L1860.96 317.53 L1860.72 317.61 L1860.47 317.69 L1860.23 317.79 L1859.99 317.95 L1859.79 318.27 L1859.61 318.87 L1859.39 319.45 L1859.13 319.77 L1858.83 319.90 L1858.52 319.95 L1858.21 319.98 L1857.90 319.98 L1857.59 319.98 L1857.28 319.95 L1856.97 319.90 L1856.67 319.77 L1856.41 319.45 L1856.19 318.87 L1856.01 318.27 L1855.81 317.95 L1855.57 317.79 L1855.33 317.69 L1855.08 317.61 L1854.84 317.53 L1854.59 317.45 L1854.34 317.37 L1854.09 317.31 L1853.81 317.30 L1853.45 317.44 L1852.95 317.81 L1852.44 318.16 L1852.03 318.26 L1851.72 318.19 L1851.44 318.05 L1851.17 317.89 L1850.91 317.71 L1850.67 317.53 L1850.43 317.32 L1850.21 317.10 L1850.05 316.82 L1850.02 316.41 L1850.19 315.81 L1850.39 315.22 L1850.42 314.84 L1850.32 314.57 L1850.18 314.35 L1850.03 314.14 L1849.88 313.93 L1849.73 313.72 L1849.57 313.51 L1849.40 313.31 L1849.18 313.13 L1848.81 313.04 L1848.19 313.05 L1847.56 313.03 L1847.18 312.87 L1846.97 312.63 L1846.82 312.35 L1846.70 312.07 L1846.60 311.77 L1846.51 311.47 L1846.44 311.17 L1846.39 310.86 L1846.42 310.54 L1846.64 310.19 L1847.13 309.81 L1847.64 309.45 L1847.89 309.15 L1847.97 308.88 L1847.98 308.62 L1847.98 308.36 L1847.98 308.10 L1847.98 307.84 L1847.98 307.58 L1847.97 307.32 L1847.89 307.05 L1847.64 306.75 L1847.13 306.39 L1846.64 306.01 L1846.42 305.66 L1846.39 305.34 L1846.44 305.03 L1846.51 304.73 L1846.60 304.43 L1846.70 304.13 L1846.82 303.85 L1846.97 303.57 L1847.18 303.33 L1847.56 303.17 L1848.19 303.15 L1848.81 303.16 L1849.18 303.07 L1849.40 302.89 L1849.57 302.69 L1849.73 302.48 L1849.88 302.27 L1850.03 302.06 L1850.18 301.85 L1850.32 301.63 L1850.42 301.36 L1850.39 300.98 L1850.19 300.39 L1850.02 299.79 L1850.05 299.38 L1850.21 299.10 L1850.43 298.88 L1850.67 298.67 L1850.91 298.49 L1851.17 298.31 L1851.44 298.15 L1851.72 298.01 L1852.03 297.94 L1852.44 298.04 L1852.95 298.39 L1853.45 298.76 L1853.81 298.90 L1854.09 298.89 L1854.34 298.83 L1854.59 298.75 L1854.84 298.67 L1855.08 298.59 L1855.33 298.51 L1855.57 298.41 L1855.81 298.25 L1856.01 297.93 L1856.19 297.33 L1856.41 296.75 L1856.67 296.43 L1856.97 296.30 L1857.28 296.25 L1857.59 296.22 L1857.90 296.22 L1858.21 296.22 L1858.52 296.25 L1858.83 296.30 L1859.13 296.43 L1859.39 296.75 L1859.61 297.33 L1859.79 297.93 L1859.99 298.25 L1860.23 298.41 L1860.47 298.51 L1860.72 298.59 L1860.96 298.67 L1861.21 298.75 L1861.46 298.83 L1861.71 298.89 L1861.99 298.90 L1862.35 298.76 L1862.85 298.39 L1863.36 298.04 L1863.77 297.94 L1864.08 298.01 L1864.36 298.15 L1864.63 298.31 L1864.89 298.49 L1865.13 298.67 L1865.37 298.88 L1865.59 299.10 L1865.75 299.38 L1865.78 299.79 L1865.61 300.39 L1865.41 300.98 L1865.38 301.36 L1865.48 301.63 L1865.62 301.85 L1865.77 302.06 L1865.92 302.27 L1866.07 302.48 L1866.23 302.69 L1866.40 302.89 L1866.62 303.07 L1866.99 303.16 L1867.61 303.15 L1868.24 303.17 L1868.62 303.33 L1868.83 303.57 L1868.98 303.85 L1869.10 304.13 L1869.20 304.43 L1869.29 304.73 L1869.36 305.03 L1869.41 305.34 L1869.38 305.66 L1869.16 306.01 L1868.67 306.39 L1868.16 306.75 L1867.91 307.05 L1867.83 307.32 L1867.82 307.58 L1867.82 307.84Z" fill="#f0e8dc" stroke="#f0e8dc" stroke-width="0.6" stroke-linejoin="round"/><circle cx="1857.9" cy="308.2" r="4.8" fill="#4a463e"/></svg>
<span class="t" style="left:1556.90px;top:340.49px;font-size:14.30px;color:#ece6da;transform:scaleX(0.9467);">Laps:</span>
<div class="a" style="left:1552.00px;top:362.30px;width:336.00px;height:213.40px;border:1px solid #a8a8a8;box-sizing:border-box;overflow:hidden;"></div>
<div class="a" style="left:1561.30px;top:371.00px;width:300.40px;height:65.00px;border:1px solid #3d3d3d;box-sizing:border-box;border-radius:4px;"></div><div class="a" style="left:1573.60px;top:389.10px;width:13.00px;height:13.00px;background:#fff;"><svg width="13" height="13" viewBox="0 0 13 13" style="position:absolute;left:0;top:0"><path d="M2.6 6.6 L5.3 9.6 L10.6 3" fill="none" stroke="#111" stroke-width="2.1"/></svg></div><span class="t" style="left:1593.60px;top:389.79px;font-size:14.30px;color:#ece6da;transform:scaleX(0.9408);">Lap: 1</span><span class="t" style="left:1642.20px;top:389.79px;font-size:14.30px;color:#ece6da;transform:scaleX(0.9837);">00:44.340</span><div class="a" style="left:1710.00px;top:386.00px;width:20.30px;height:20.30px;background:#e6194b;"></div><div class="a" style="left:1737.00px;top:383.20px;width:25.60px;height:24.60px;border:1px solid #3d3d3d;box-sizing:border-box;"></div><svg class="a" style="left:1748.50px;top:390.10px;" width="10" height="10" viewBox="-5 -5 10 10"><path d="M-2.60 -1.30 L0 1.50 L2.60 -1.30" fill="none" stroke="#e8e0d4" stroke-width="1.5"/></svg><div class="a" style="left:1764.20px;top:383.20px;width:39.80px;height:24.60px;border:1px solid #3d3d3d;box-sizing:border-box;"></div><span class="t" style="left:1769.75px;top:389.19px;font-size:11.70px;color:#ece6da;">2</span><svg class="a" style="left:1789.40px;top:390.10px;" width="10" height="10" viewBox="-5 -5 10 10"><path d="M-2.60 -1.30 L0 1.50 L2.60 -1.30" fill="none" stroke="#e8e0d4" stroke-width="1.5"/></svg><div class="a" style="left:1819.00px;top:381.90px;width:22.00px;height:28.20px;background:#4a463e;"></div><svg class="a" style="left:1819.00px;top:381.90px;" width="22" height="28.2" viewBox="0 0 22 28.2"><circle cx="11" cy="14.1" r="5.6" fill="none" stroke="#f0e8dc" stroke-width="1.2"/><path d="M8.5 11.6 L13.5 16.6 M13.5 11.6 L8.5 16.6" stroke="#f0e8dc" stroke-width="1.9"/></svg><span class="t" style="left:1567.20px;top:416.99px;font-size:11.70px;color:#ece6da;transform:scaleX(0.9359);">S1: 14,102  S2: 14,645  S3: 15,594</span>
<div class="a" style="left:1561.30px;top:451.00px;width:300.40px;height:65.00px;border:1px solid #3d3d3d;box-sizing:border-box;border-radius:4px;"></div><div class="a" style="left:1573.60px;top:469.10px;width:13.00px;height:13.00px;background:#fff;"></div><span class="t" style="left:1593.60px;top:469.79px;font-size:14.30px;color:#ece6da;transform:scaleX(0.9408);">Lap: 2</span><span class="t" style="left:1642.20px;top:469.79px;font-size:14.30px;color:#ece6da;transform:scaleX(0.9837);">00:43.487</span><div class="a" style="left:1710.00px;top:466.00px;width:20.30px;height:20.30px;background:#3cb44b;"></div><div class="a" style="left:1737.00px;top:463.20px;width:25.60px;height:24.60px;border:1px solid #3d3d3d;box-sizing:border-box;"></div><svg class="a" style="left:1748.50px;top:470.10px;" width="10" height="10" viewBox="-5 -5 10 10"><path d="M-2.60 -1.30 L0 1.50 L2.60 -1.30" fill="none" stroke="#e8e0d4" stroke-width="1.5"/></svg><div class="a" style="left:1764.20px;top:463.20px;width:39.80px;height:24.60px;border:1px solid #3d3d3d;box-sizing:border-box;"></div><span class="t" style="left:1769.75px;top:469.19px;font-size:11.70px;color:#ece6da;">2</span><svg class="a" style="left:1789.40px;top:470.10px;" width="10" height="10" viewBox="-5 -5 10 10"><path d="M-2.60 -1.30 L0 1.50 L2.60 -1.30" fill="none" stroke="#e8e0d4" stroke-width="1.5"/></svg><div class="a" style="left:1819.00px;top:461.90px;width:22.00px;height:28.20px;background:#4a463e;"></div><svg class="a" style="left:1819.00px;top:461.90px;" width="22" height="28.2" viewBox="0 0 22 28.2"><circle cx="11" cy="14.1" r="5.6" fill="none" stroke="#f0e8dc" stroke-width="1.2"/><path d="M8.5 11.6 L13.5 16.6 M13.5 11.6 L8.5 16.6" stroke="#f0e8dc" stroke-width="1.9"/></svg><span class="t" style="left:1567.20px;top:496.99px;font-size:11.70px;color:#ece6da;transform:scaleX(0.9359);">S1: 13,420  S2: 14,585  S3: 15,482</span>
<div class="a" style="left:1561.30px;top:530.20px;width:300.40px;height:44.00px;border:1px solid #3d3d3d;box-sizing:border-box;border-radius:4px 4px 0 0;border-bottom:none;"></div><div class="a" style="left:1573.60px;top:548.30px;width:13.00px;height:13.00px;background:#fff;"></div><span class="t" style="left:1593.60px;top:548.99px;font-size:14.30px;color:#ece6da;transform:scaleX(0.9408);">Lap: 3</span><span class="t" style="left:1642.20px;top:548.99px;font-size:14.30px;color:#ece6da;transform:scaleX(0.9837);">00:43.593</span><div class="a" style="left:1710.00px;top:545.20px;width:20.30px;height:20.30px;background:#ffe119;"></div><div class="a" style="left:1737.00px;top:542.40px;width:25.60px;height:24.60px;border:1px solid #3d3d3d;box-sizing:border-box;"></div><svg class="a" style="left:1748.50px;top:549.30px;" width="10" height="10" viewBox="-5 -5 10 10"><path d="M-2.60 -1.30 L0 1.50 L2.60 -1.30" fill="none" stroke="#e8e0d4" stroke-width="1.5"/></svg><div class="a" style="left:1764.20px;top:542.40px;width:39.80px;height:24.60px;border:1px solid #3d3d3d;box-sizing:border-box;"></div><span class="t" style="left:1769.75px;top:548.39px;font-size:11.70px;color:#ece6da;">2</span><svg class="a" style="left:1789.40px;top:549.30px;" width="10" height="10" viewBox="-5 -5 10 10"><path d="M-2.60 -1.30 L0 1.50 L2.60 -1.30" fill="none" stroke="#e8e0d4" stroke-width="1.5"/></svg><div class="a" style="left:1819.00px;top:541.10px;width:22.00px;height:28.20px;background:#4a463e;"></div><svg class="a" style="left:1819.00px;top:541.10px;" width="22" height="28.2" viewBox="0 0 22 28.2"><circle cx="11" cy="14.1" r="5.6" fill="none" stroke="#f0e8dc" stroke-width="1.2"/><path d="M8.5 11.6 L13.5 16.6 M13.5 11.6 L8.5 16.6" stroke="#f0e8dc" stroke-width="1.9"/></svg>
<div class="a" style="left:1868.40px;top:363.30px;width:18.60px;height:211.40px;background:#0a0a0a;"></div>
<div class="a" style="left:1869.20px;top:364.30px;width:17.00px;height:210.40px;background:#f0f0f0;"></div>
<div class="a" style="left:1869.20px;top:381.40px;width:17.00px;height:34.30px;background:#cdcdcd;"></div>
<svg class="a" style="left:1869.00px;top:364.00px;" width="17" height="17" viewBox="0 0 17 17"><path d="M5 10.3 L8.6 6.8 L12.2 10.3" fill="none" stroke="#a0a0a0" stroke-width="1.3"/></svg>
<svg class="a" style="left:1869.00px;top:557.00px;" width="17" height="17" viewBox="0 0 17 17"><path d="M5 6.8 L8.6 10.3 L12.2 6.8" fill="none" stroke="#a0a0a0" stroke-width="1.3"/></svg>
<div class="a" style="left:1557.00px;top:581.00px;width:26.00px;height:31.60px;background:#4a463e;"></div>
<svg class="a" style="left:1557.00px;top:581.00px;" width="26" height="31.6" viewBox="0 0 26 31.6"><circle cx="13.1" cy="15.5" r="10.9" fill="none" stroke="#f0e8dc" stroke-width="3.3"/><path d="M6.6 15.5 h13 M13.1 9 v13" stroke="#f0e8dc" stroke-width="2.9" stroke-linecap="round"/></svg>
<div class="a" style="left:1593.00px;top:581.00px;width:26.00px;height:31.60px;background:#4a463e;"></div>
<svg class="a" style="left:1593.00px;top:581.00px;" width="26" height="31.6" viewBox="0 0 26 31.6"><path d="M1.2 1.9 V28.3 H26" fill="none" stroke="#f0e8dc" stroke-width="1.7"/><path d="M4.3 5.3 L10.4 14 L17.5 17.7 L23.6 22.8" fill="none" stroke="#f0e8dc" stroke-width="0.8"/><path d="M4.1 16.2 L10.7 20.9 L17.5 12.7 L23.9 8.7" fill="none" stroke="#f0e8dc" stroke-width="0.8"/><g fill="#f0e8dc"><circle cx="4.3" cy="5.3" r="1.35"/><circle cx="10.4" cy="14" r="1.35"/><circle cx="17.5" cy="17.7" r="1.35"/><circle cx="23.6" cy="22.8" r="1.35"/><circle cx="4.1" cy="16.2" r="1.35"/><circle cx="10.7" cy="20.9" r="1.35"/><circle cx="17.5" cy="12.7" r="1.35"/><circle cx="23.9" cy="8.7" r="1.35"/></g></svg>
<div class="a" style="left:1761.00px;top:581.00px;width:26.00px;height:31.60px;background:#4a463e;"></div>
<svg class="a" style="left:1761.00px;top:581.00px;" width="26" height="31.6" viewBox="0 0 26 31.6"><path d="M1.2 16 L7.2 21.8 L19 9" fill="none" stroke="#f0e8dc" stroke-width="3.2"/><path d="M7 16 L13 21.8 L25.4 9" fill="none" stroke="#f0e8dc" stroke-width="3.2"/><path d="M9.2 15.8 L11.6 18" fill="none" stroke="#4a463e" stroke-width="1"/></svg>
<div class="a" style="left:1797.00px;top:581.00px;width:26.00px;height:31.60px;background:#4a463e;"></div>
<svg class="a" style="left:1797.00px;top:581.00px;" width="26" height="31.6" viewBox="0 0 26 31.6"><path d="M1.2 16 L7.2 21.8 L19 9" fill="none" stroke="#aaa394" stroke-width="3.4"/><path d="M1.2 16 L7.2 21.8 L19 9" fill="none" stroke="#5a554b" stroke-width="1.6"/><path d="M7 16 L13 21.8 L25.4 9" fill="none" stroke="#aaa394" stroke-width="3.4"/><path d="M7 16 L13 21.8 L25.4 9" fill="none" stroke="#4a463e" stroke-width="1.6"/></svg>
<div class="a" style="left:1827.80px;top:583.80px;width:59.80px;height:24.60px;border:1px solid #47463f;box-sizing:border-box;"></div>
<span class="t" style="left:1834.20px;top:589.84px;font-size:12.00px;color:#ece6da;transform:scaleX(0.9835);">All</span>
<svg class="a" style="left:1873.40px;top:590.60px;" width="10" height="10" viewBox="-5 -5 10 10"><path d="M-2.60 -1.30 L0 1.50 L2.60 -1.30" fill="none" stroke="#e8e0d4" stroke-width="1.5"/></svg>
<div class="a" style="left:0.00px;top:613.50px;width:1544.00px;height:398.50px;background:#0a0a0a;"></div>
<div class="a" style="left:1.10px;top:615.60px;width:1542.60px;height:352.00px;border:2.3px solid #3f3d37;box-sizing:border-box;"></div>
<div class="a" style="left:4.40px;top:619.00px;width:34.40px;height:35.00px;background:#141414;border-radius:5px;"></div>
<div class="a" style="left:8.00px;top:622.80px;width:26.00px;height:26.00px;background:#4a463e;"></div>
<svg class="a" style="left:15.00px;top:629.80px;" width="12" height="12" viewBox="0 0 12 12"><rect x="1.2" y="4.2" width="6.3" height="6.3" rx="0.3" fill="none" stroke="#f0e8dc" stroke-width="1.5"/><path d="M4.6 3.9 V1.2 H10.9 V7.6 H8" fill="none" stroke="#f0e8dc" stroke-width="1.5"/><path d="M7.4 2.9 h1.8 v1.8" fill="none" stroke="#f0e8dc" stroke-width="0.9"/></svg>
<span class="t" style="left:8.20px;top:681.69px;font-size:14.30px;color:#ece6da;transform:scaleX(0.9774);">Reference Lap:</span>
<div class="a" style="left:109.10px;top:674.80px;width:35.40px;height:25.00px;border:1px solid #363636;box-sizing:border-box;background:#191919;"></div>
<span class="t" style="left:115.23px;top:681.49px;font-size:14.30px;color:#ece6da;">1</span>
<svg class="a" style="left:130.40px;top:681.60px;" width="10" height="10" viewBox="-5 -5 10 10"><path d="M-2.34 -1.17 L0 1.35 L2.34 -1.17" fill="none" stroke="#e8e0d4" stroke-width="1.5"/></svg>
<div class="a" style="left:144.70px;top:623.00px;width:1391.50px;height:128.00px;border:3px solid #4a463e;box-sizing:border-box;background:#0a0a0a;"></div>
<div class="a" style="left:162.80px;top:648.80px;width:1355.20px;height:4.40px;background:#e8e8e8;"></div>
<div class="a" style="left:163.00px;top:636.60px;width:1.00px;height:3.60px;background:#e0e0e0;"></div><div class="a" style="left:163.00px;top:662.00px;width:1.00px;height:3.60px;background:#e0e0e0;"></div><div class="a" style="left:234.00px;top:636.60px;width:1.00px;height:3.60px;background:#e0e0e0;"></div><div class="a" style="left:234.00px;top:662.00px;width:1.00px;height:3.60px;background:#e0e0e0;"></div><div class="a" style="left:305.00px;top:636.60px;width:1.00px;height:3.60px;background:#e0e0e0;"></div><div class="a" style="left:305.00px;top:662.00px;width:1.00px;height:3.60px;background:#e0e0e0;"></div><div class="a" style="left:375.00px;top:636.60px;width:1.00px;height:3.60px;background:#e0e0e0;"></div><div class="a" style="left:375.00px;top:662.00px;width:1.00px;height:3.60px;background:#e0e0e0;"></div><div class="a" style="left:446.00px;top:636.60px;width:1.00px;height:3.60px;background:#e0e0e0;"></div><div class="a" style="left:446.00px;top:662.00px;width:1.00px;height:3.60px;background:#e0e0e0;"></div><div class="a" style="left:517.00px;top:636.60px;width:1.00px;height:3.60px;background:#e0e0e0;"></div><div class="a" style="left:517.00px;top:662.00px;width:1.00px;height:3.60px;background:#e0e0e0;"></div><div class="a" style="left:588.00px;top:636.60px;width:1.00px;height:3.60px;background:#e0e0e0;"></div><div class="a" style="left:588.00px;top:662.00px;width:1.00px;height:3.60px;background:#e0e0e0;"></div><div class="a" style="left:658.00px;top:636.60px;width:1.00px;height:3.60px;background:#e0e0e0;"></div><div class="a" style="left:658.00px;top:662.00px;width:1.00px;height:3.60px;background:#e0e0e0;"></div><div class="a" style="left:729.00px;top:636.60px;width:1.00px;height:3.60px;background:#e0e0e0;"></div><div class="a" style="left:729.00px;top:662.00px;width:1.00px;height:3.60px;background:#e0e0e0;"></div><div class="a" style="left:800.00px;top:636.60px;width:1.00px;height:3.60px;background:#e0e0e0;"></div><div class="a" style="left:800.00px;top:662.00px;width:1.00px;height:3.60px;background:#e0e0e0;"></div><div class="a" style="left:870.00px;top:636.60px;width:1.00px;height:3.60px;background:#e0e0e0;"></div><div class="a" style="left:870.00px;top:662.00px;width:1.00px;height:3.60px;background:#e0e0e0;"></div><div class="a" style="left:941.00px;top:636.60px;width:1.00px;height:3.60px;background:#e0e0e0;"></div><div class="a" style="left:941.00px;top:662.00px;width:1.00px;height:3.60px;background:#e0e0e0;"></div><div class="a" style="left:1012.00px;top:636.60px;width:1.00px;height:3.60px;background:#e0e0e0;"></div><div class="a" style="left:1012.00px;top:662.00px;width:1.00px;height:3.60px;background:#e0e0e0;"></div><div class="a" style="left:1082.00px;top:636.60px;width:1.00px;height:3.60px;background:#e0e0e0;"></div><div class="a" style="left:1082.00px;top:662.00px;width:1.00px;height:3.60px;background:#e0e0e0;"></div><div class="a" style="left:1153.00px;top:636.60px;width:1.00px;height:3.60px;background:#e0e0e0;"></div><div class="a" style="left:1153.00px;top:662.00px;width:1.00px;height:3.60px;background:#e0e0e0;"></div><div class="a" style="left:1224.00px;top:636.60px;width:1.00px;height:3.60px;background:#e0e0e0;"></div><div class="a" style="left:1224.00px;top:662.00px;width:1.00px;height:3.60px;background:#e0e0e0;"></div><div class="a" style="left:1294.00px;top:636.60px;width:1.00px;height:3.60px;background:#e0e0e0;"></div><div class="a" style="left:1294.00px;top:662.00px;width:1.00px;height:3.60px;background:#e0e0e0;"></div><div class="a" style="left:1365.00px;top:636.60px;width:1.00px;height:3.60px;background:#e0e0e0;"></div><div class="a" style="left:1365.00px;top:662.00px;width:1.00px;height:3.60px;background:#e0e0e0;"></div><div class="a" style="left:1436.00px;top:636.60px;width:1.00px;height:3.60px;background:#e0e0e0;"></div><div class="a" style="left:1436.00px;top:662.00px;width:1.00px;height:3.60px;background:#e0e0e0;"></div><div class="a" style="left:1507.00px;top:636.60px;width:1.00px;height:3.60px;background:#e0e0e0;"></div><div class="a" style="left:1507.00px;top:662.00px;width:1.00px;height:3.60px;background:#e0e0e0;"></div><div class="a" style="left:1517.00px;top:636.60px;width:1.00px;height:3.60px;background:#e0e0e0;"></div><div class="a" style="left:1517.00px;top:662.00px;width:1.00px;height:3.60px;background:#e0e0e0;"></div>
<div class="a" style="left:335.60px;top:642.30px;width:10.00px;height:17.40px;background:#e6e6e6;border-radius:1px;border:1px solid #bdbdbd;box-sizing:border-box;"></div>
<div class="a" style="left:709.50px;top:666.20px;width:263.30px;height:51.20px;border:2px solid #4a463e;box-sizing:border-box;background:#0a0a0a;"></div><div class="a" style="left:712.00px;top:669.00px;width:46.00px;height:45.60px;background:#181818;border-radius:6px;"></div><div class="a" style="left:716.00px;top:672.90px;width:38.00px;height:37.80px;background:#4a463e;"></div><div class="a" style="left:760.00px;top:669.00px;width:46.00px;height:45.60px;background:#181818;border-radius:6px;"></div><div class="a" style="left:764.00px;top:672.90px;width:38.00px;height:37.80px;background:#4a463e;"></div><div class="a" style="left:808.00px;top:669.00px;width:46.00px;height:45.60px;background:#181818;border-radius:6px;"></div><div class="a" style="left:812.00px;top:672.90px;width:38.00px;height:37.80px;background:#4a463e;"></div><div class="a" style="left:856.00px;top:669.00px;width:46.00px;height:45.60px;background:#181818;border-radius:6px;"></div><div class="a" style="left:860.00px;top:672.90px;width:38.00px;height:37.80px;background:#4a463e;"></div><div class="a" style="left:924.00px;top:669.00px;width:46.00px;height:45.60px;background:#181818;border-radius:6px;"></div><div class="a" style="left:928.00px;top:672.90px;width:38.00px;height:37.80px;background:#4a463e;"></div><svg class="a" style="left:700.00px;top:660.00px;" width="290" height="64" viewBox="700 660 290 64"><circle cx="735" cy="691.8" r="16" fill="#f0e8dc"/><path d="M735.2 686.6 l-7.6 5.2 l7.6 5.2z" fill="#4a463e"/><rect x="738" y="686" width="3.6" height="11.6" rx="1.4" fill="#4a463e"/><rect x="766.8" y="676" width="32.4" height="31.6" rx="5" fill="#f0e8dc"/><rect x="814.8" y="676" width="32.4" height="31.6" rx="11" fill="#f0e8dc"/><path d="M827.4 686.2 l9.4 5.6 l-9.4 5.6z" fill="#4a463e" stroke="#4a463e" stroke-width="1" stroke-linejoin="round"/><circle cx="879" cy="691.8" r="16" fill="#f0e8dc"/><rect x="872.2" y="686" width="3.6" height="11.6" rx="1.4" fill="#4a463e"/><path d="M879.4 686.6 l7.6 5.2 l-7.6 5.2z" fill="#4a463e"/><circle cx="947" cy="691.8" r="16" fill="#f0e8dc"/><g fill="none" stroke="#4a463e" stroke-width="2.2" transform="translate(947 691.8)"><path d="M-7.6 1.4 A7.6 7.6 0 0 1 2.2 -7.2"/><path d="M7.6 -1.4 A7.6 7.6 0 0 1 -2.2 7.2"/></g><path d="M952.6 688.2 l-4.2 -3.6 l4.6 -3z" fill="#4a463e"/><path d="M941.4 695.4 l4.2 3.6 l-4.6 3z" fill="#4a463e"/></svg>
<span class="t" style="left:158.20px;top:723.19px;font-size:14.30px;color:#ece6da;transform:scaleX(1.0122);">Current Time: 00:04.973</span>
<span class="t" style="left:613.40px;top:723.19px;font-size:14.30px;color:#ece6da;transform:scaleX(1.0244);">Current Distance: 250 m</span>
<span class="t" style="left:1068.40px;top:723.19px;font-size:14.30px;color:#ece6da;transform:scaleX(0.9877);">Sync Distance: 0</span>
<div class="a" style="left:7.80px;top:751.20px;width:212.20px;height:209.40px;background:#0a0a0a;border:2.4px solid #4a463e;box-sizing:border-box;"></div><div class="a" style="left:10.00px;top:753.90px;width:45.00px;height:167.10px;border:2.7px solid #7b7b79;border-radius:5px;box-sizing:border-box;background:#070707;"></div><div class="a" style="left:54.40px;top:753.90px;width:44.90px;height:167.10px;border:2.7px solid #7b7b79;border-radius:5px;box-sizing:border-box;background:#070707;overflow:hidden;"><div class="a" style="left:0;top:0;width:42px;height:11.6px;background:#8f0010"></div></div><div class="a" style="left:98.70px;top:753.90px;width:44.60px;height:167.10px;border:2.7px solid #7b7b79;border-radius:5px;box-sizing:border-box;background:#070707;"></div><div class="a" style="left:142.70px;top:753.90px;width:74.30px;height:167.10px;border:2.7px solid #7b7b79;border-radius:5px;box-sizing:border-box;background:#070707;"></div><div class="a" style="left:10.00px;top:920.40px;width:207.00px;height:38.40px;border:2.7px solid #7b7b79;border-radius:5px;box-sizing:border-box;background:#070707;"></div><span class="t" style="left:28.68px;top:902.13px;font-size:15.20px;color:#f4f0e8;font-weight:bold;">0</span><span class="t" style="left:62.22px;top:902.13px;font-size:15.20px;color:#f4f0e8;font-weight:bold;">6,27</span><span class="t" style="left:116.78px;top:902.13px;font-size:15.20px;color:#f4f0e8;font-weight:bold;">0</span><span class="t" style="left:165.02px;top:902.13px;font-size:15.20px;color:#f4f0e8;font-weight:bold;">77,1</span><span class="t" style="left:31.82px;top:932.93px;font-size:15.20px;color:#f4f0e8;font-weight:bold;">95,0</span><svg class="a" style="left:100.00px;top:925.00px;" width="30" height="30" viewBox="100 925 30 30"><path d="M118.5 949.8 H113.9 V937.4 L109.7 939.6 L108.9 935.7 L114.7 932.2 H118.5Z" fill="#f4f0e8"/></svg><span class="t" style="left:164.49px;top:932.93px;font-size:15.20px;color:#f4f0e8;font-weight:bold;">5830</span><svg class="a" style="left:8.00px;top:751.00px;" width="212" height="210" viewBox="8 751 212 210"><g transform="translate(32.9 837.5)" fill="none" stroke="#e8e2d6"><circle r="14.4" stroke-width="1.1"/><circle r="10.7" stroke-width="4.4" stroke-dasharray="1.75 1.612"/><circle r="6.6" stroke-width="1"/><circle r="2.1" stroke-width="0.9"/><ellipse cx="4.3" cy="0" rx="0.9" ry="1.7" fill="#e8e2d6" stroke="none" transform="rotate(45)"/><ellipse cx="4.3" cy="0" rx="0.9" ry="1.7" fill="#e8e2d6" stroke="none" transform="rotate(135)"/><ellipse cx="4.3" cy="0" rx="0.9" ry="1.7" fill="#e8e2d6" stroke="none" transform="rotate(225)"/><ellipse cx="4.3" cy="0" rx="0.9" ry="1.7" fill="#e8e2d6" stroke="none" transform="rotate(315)"/></g><g transform="translate(78.3 837.5)" fill="none" stroke="#e8e2d6" stroke-width="1"><circle r="13.4"/><circle r="8.2"/><circle r="6.7" stroke-width="0.8"/><circle r="4.6"/><circle r="0.9" stroke-width="0.8"/><path d="M-11.2 -7.2 q-2.4 -0.6 -3.8 1.6 q-1.6 2.4 -0.6 4.4 q-1 1.2 -1 1.2 q1 1.2 1 1.2 q-1 2 0.6 4.4 q1.4 2.2 3.8 1.6" /><path d="M-12.2 -4.6 q-2.2 2 -0.8 4.6 q-1.4 2.6 0.8 4.6" stroke-width="0.8"/></g><rect x="106.3" y="818.4" width="2.6" height="38.4" fill="none" stroke="#e8e2d6" stroke-width="0.9"/><rect x="133.2" y="818.4" width="2.6" height="38.4" fill="none" stroke="#e8e2d6" stroke-width="0.9"/><path d="M111 828.6 L131.1 847" stroke="#e8e2d6" stroke-width="2.7" stroke-linecap="round"/><path d="M111 828.6 L131.1 847" stroke="#222" stroke-width="0.9" stroke-linecap="round"/><circle cx="121.3" cy="837.5" r="2.2" fill="#0a0a0a" stroke="#e8e2d6" stroke-width="0.9"/><g transform="translate(180.1 837.5) rotate(77.1)"><circle r="29.8" fill="#f0e8dc"/><path d="M-19.7 -8.7 A21.8 21.8 0 0 1 19.7 -8.7 Q0 -14.6 -19.7 -8.7z" fill="#070707"/><path d="M-10.4 0.6 Q0 -10.4 10.4 0.6 Q0 8 -10.4 0.6z" fill="#070707" transform="translate(13 13.2) rotate(-45)"/><path d="M-10.4 0.6 Q0 -10.4 10.4 0.6 Q0 8 -10.4 0.6z" fill="#070707" transform="translate(-13 13.2) rotate(45) scale(1 -1)"/></g></svg>
<div class="a" style="left:220.50px;top:751.50px;width:656.40px;height:103.40px;background:#191919;border:1px solid #353533;box-sizing:border-box;"></div><span class="t" style="left:227.10px;top:758.66px;font-size:22.60px;color:#698cff;font-weight:bold;transform:scaleX(1.0324);-webkit-text-stroke:0.35px #698cff;">40</span><span class="t" style="left:535.85px;top:758.66px;font-size:22.60px;color:#698cff;font-weight:bold;transform:scaleX(0.9288);-webkit-text-stroke:0.35px #698cff;">41</span><span class="t" style="left:845.00px;top:758.66px;font-size:22.60px;color:#698cff;font-weight:bold;transform:scaleX(0.9966);-webkit-text-stroke:0.35px #698cff;">42</span><svg class="a" style="left:227.10px;top:785.80px;" width="22.8" height="38.1" viewBox="0 0 22.8 38.1"><defs><pattern id="hatch3056" width="3" height="3" patternUnits="userSpaceOnUse" patternTransform="rotate(-35)"><rect width="3" height="1.2" fill="#1f9639"/></pattern></defs><rect x="0.6" y="0.6" width="21.6" height="36.9" rx="3.4" fill="#0a1a0e" stroke="#1f9639" stroke-width="1.2"/><rect x="5.2" y="1.4" width="4.7" height="35.3" fill="url(#hatch3056)" opacity="0.7"/><rect x="14.2" y="1.4" width="3.9" height="35.3" fill="url(#hatch3056)" opacity="0.7"/><line x1="5.2" y1="1" x2="5.2" y2="37.1" stroke="#1f9639" stroke-width="0.9"/><line x1="9.9" y1="1" x2="9.9" y2="37.1" stroke="#1f9639" stroke-width="0.9"/><line x1="14.2" y1="1" x2="14.2" y2="37.1" stroke="#1f9639" stroke-width="0.9"/><line x1="18.1" y1="1" x2="18.1" y2="37.1" stroke="#1f9639" stroke-width="0.9"/><line x1="3.1" y1="3.2" x2="3.1" y2="35.5" stroke="#49c468" stroke-width="1" stroke-dasharray="1.6 1.75"/><line x1="12" y1="3.2" x2="12" y2="35.5" stroke="#49c468" stroke-width="1" stroke-dasharray="1.6 1.75"/><line x1="20.2" y1="3.2" x2="20.2" y2="35.5" stroke="#49c468" stroke-width="1" stroke-dasharray="1.6 1.75"/></svg><div class="a" style="left:255.20px;top:784.00px;width:620.40px;height:41.20px;background:#698cff;border:4px solid #c4b4bc;border-radius:6.5px;box-sizing:border-box;overflow:hidden;"><div class="a" style="left:0;top:0;width:3.9px;height:40px;background:#424242"></div><div class="a" style="left:9.7px;top:0;width:1.2px;height:40px;background:#8fa896"></div><div class="a" style="right:0;top:0;width:3.8px;height:40px;background:#0d0d24"></div></div><span class="t" style="left:259.70px;top:799.14px;font-size:12.00px;color:#ece6ee;transform:scaleX(0.9180);">Slick</span><span class="t" style="left:552.10px;top:793.19px;font-size:26.00px;color:#e8e2f0;transform:scaleX(0.9217);">42</span><span class="t" style="left:854.70px;top:799.54px;font-size:12.00px;color:#ece6ee;transform:scaleX(0.8934);">99</span><div class="a" style="left:224.10px;top:829.20px;width:4.80px;height:22.80px;background:#148a2b;border:0.7px solid #2a9a42;"></div><svg class="a" style="left:230.50px;top:827.50px;" width="28" height="26" viewBox="-14 -13 28 26"><circle cx="0" cy="0" r="11.1" fill="none" stroke="#f0ece4" stroke-width="1"/><circle cx="0" cy="0" r="6.2" fill="none" stroke="#f0ece4" stroke-width="1"/><circle cx="0" cy="0" r="4.7" fill="none" stroke="#f0ece4" stroke-width="0.8"/><circle cx="0" cy="0" r="1.1" fill="none" stroke="#f0ece4" stroke-width="0.8"/><path d="M-9 -6.4 q-2.2 -0.6 -3.4 1.2 q-1.4 2 -0.6 3.8 l-0.8 1.4 l0.8 1.4 q-0.8 1.8 0.6 3.8 q1.2 1.8 3.4 1.2" fill="none" stroke="#f0ece4" stroke-width="1"/><path d="M-10.4 -4 q-1.8 1.8 -0.6 4 q-1.2 2.2 0.6 4" fill="none" stroke="#f0ece4" stroke-width="0.8"/></svg><span class="t" style="left:266.80px;top:830.76px;font-size:22.60px;color:#1f9639;font-weight:bold;transform:scaleX(1.0121);-webkit-text-stroke:0.35px #1f9639;">318</span><span class="t" style="left:810.10px;top:830.76px;font-size:22.60px;color:#f4eee2;font-weight:bold;transform:scaleX(0.9591);-webkit-text-stroke:0.35px #f4eee2;">133</span><svg class="a" style="left:857.60px;top:829.40px;" width="13.6" height="23.6" viewBox="0 0 13.6 23.6"><circle cx="6.8" cy="7" r="6.1" fill="none" stroke="#f0ece4" stroke-width="1"/><circle cx="6.8" cy="7" r="4.1" fill="none" stroke="#f0ece4" stroke-width="0.9" stroke-dasharray="0.8 1.35"/><path d="M6.4 7.4 L8.6 5.4" stroke="#f0ece4" stroke-width="0.9"/><path d="M5.4 13 h2.8 v2.6 h-2.8z" fill="none" stroke="#f0ece4" stroke-width="0.8"/><path d="M4.5 15.6 h4.8 v2.2 h-4.8z M4.8 18.9 h4.2 v3.3 h-4.2z" fill="#f0ece4"/></svg>
<div class="a" style="left:220.50px;top:856.60px;width:656.40px;height:103.40px;background:#191919;border:1px solid #353533;box-sizing:border-box;"></div><span class="t" style="left:227.10px;top:863.76px;font-size:22.60px;color:#698cff;font-weight:bold;transform:scaleX(0.9288);-webkit-text-stroke:0.35px #698cff;">41</span><span class="t" style="left:535.85px;top:863.76px;font-size:22.60px;color:#698cff;font-weight:bold;transform:scaleX(0.9288);-webkit-text-stroke:0.35px #698cff;">41</span><span class="t" style="left:845.00px;top:863.76px;font-size:22.60px;color:#698cff;font-weight:bold;transform:scaleX(0.9966);-webkit-text-stroke:0.35px #698cff;">42</span><svg class="a" style="left:227.10px;top:890.90px;" width="22.8" height="38.1" viewBox="0 0 22.8 38.1"><defs><pattern id="hatch3161" width="3" height="3" patternUnits="userSpaceOnUse" patternTransform="rotate(-35)"><rect width="3" height="1.2" fill="#1f9639"/></pattern></defs><rect x="0.6" y="0.6" width="21.6" height="36.9" rx="3.4" fill="#0a1a0e" stroke="#1f9639" stroke-width="1.2"/><rect x="5.2" y="1.4" width="4.7" height="35.3" fill="url(#hatch3161)" opacity="0.7"/><rect x="14.2" y="1.4" width="3.9" height="35.3" fill="url(#hatch3161)" opacity="0.7"/><line x1="5.2" y1="1" x2="5.2" y2="37.1" stroke="#1f9639" stroke-width="0.9"/><line x1="9.9" y1="1" x2="9.9" y2="37.1" stroke="#1f9639" stroke-width="0.9"/><line x1="14.2" y1="1" x2="14.2" y2="37.1" stroke="#1f9639" stroke-width="0.9"/><line x1="18.1" y1="1" x2="18.1" y2="37.1" stroke="#1f9639" stroke-width="0.9"/><line x1="3.1" y1="3.2" x2="3.1" y2="35.5" stroke="#49c468" stroke-width="1" stroke-dasharray="1.6 1.75"/><line x1="12" y1="3.2" x2="12" y2="35.5" stroke="#49c468" stroke-width="1" stroke-dasharray="1.6 1.75"/><line x1="20.2" y1="3.2" x2="20.2" y2="35.5" stroke="#49c468" stroke-width="1" stroke-dasharray="1.6 1.75"/></svg><div class="a" style="left:255.20px;top:889.10px;width:620.40px;height:41.20px;background:#698cff;border:4px solid #c4b4bc;border-radius:6.5px;box-sizing:border-box;overflow:hidden;"><div class="a" style="left:0;top:0;width:3.9px;height:40px;background:#424242"></div><div class="a" style="left:9.7px;top:0;width:1.2px;height:40px;background:#8fa896"></div><div class="a" style="right:0;top:0;width:2.1px;height:40px;background:#0d0d24"></div></div><span class="t" style="left:259.70px;top:904.24px;font-size:12.00px;color:#ece6ee;transform:scaleX(0.9180);">Slick</span><span class="t" style="left:552.10px;top:898.29px;font-size:26.00px;color:#e8e2f0;transform:scaleX(0.9217);">42</span><span class="t" style="left:847.60px;top:904.64px;font-size:12.00px;color:#ece6ee;transform:scaleX(0.9481);">100</span><div class="a" style="left:224.10px;top:934.30px;width:4.80px;height:22.80px;background:#148a2b;border:0.7px solid #2a9a42;"></div><svg class="a" style="left:230.50px;top:932.60px;" width="28" height="26" viewBox="-14 -13 28 26"><circle cx="0" cy="0" r="11.1" fill="none" stroke="#f0ece4" stroke-width="1"/><circle cx="0" cy="0" r="6.2" fill="none" stroke="#f0ece4" stroke-width="1"/><circle cx="0" cy="0" r="4.7" fill="none" stroke="#f0ece4" stroke-width="0.8"/><circle cx="0" cy="0" r="1.1" fill="none" stroke="#f0ece4" stroke-width="0.8"/><path d="M-9 -6.4 q-2.2 -0.6 -3.4 1.2 q-1.4 2 -0.6 3.8 l-0.8 1.4 l0.8 1.4 q-0.8 1.8 0.6 3.8 q1.2 1.8 3.4 1.2" fill="none" stroke="#f0ece4" stroke-width="1"/><path d="M-10.4 -4 q-1.8 1.8 -0.6 4 q-1.2 2.2 0.6 4" fill="none" stroke="#f0ece4" stroke-width="0.8"/></svg><span class="t" style="left:266.80px;top:935.86px;font-size:22.60px;color:#1f9639;font-weight:bold;transform:scaleX(1.0121);-webkit-text-stroke:0.35px #1f9639;">227</span><span class="t" style="left:810.10px;top:935.86px;font-size:22.60px;color:#f4eee2;font-weight:bold;transform:scaleX(0.9591);-webkit-text-stroke:0.35px #f4eee2;">133</span><svg class="a" style="left:857.60px;top:934.50px;" width="13.6" height="23.6" viewBox="0 0 13.6 23.6"><circle cx="6.8" cy="7" r="6.1" fill="none" stroke="#f0ece4" stroke-width="1"/><circle cx="6.8" cy="7" r="4.1" fill="none" stroke="#f0ece4" stroke-width="0.9" stroke-dasharray="0.8 1.35"/><path d="M6.4 7.4 L8.6 5.4" stroke="#f0ece4" stroke-width="0.9"/><path d="M5.4 13 h2.8 v2.6 h-2.8z" fill="none" stroke="#f0ece4" stroke-width="0.8"/><path d="M4.5 15.6 h4.8 v2.2 h-4.8z M4.8 18.9 h4.2 v3.3 h-4.2z" fill="#f0ece4"/></svg>
<div class="a" style="left:879.20px;top:751.50px;width:655.80px;height:103.40px;background:#191919;border:1px solid #353533;box-sizing:border-box;"></div><span class="t" style="left:885.70px;top:758.66px;font-size:22.60px;color:#698cff;font-weight:bold;transform:scaleX(1.0045);-webkit-text-stroke:0.35px #698cff;">37</span><span class="t" style="left:1194.60px;top:758.66px;font-size:22.60px;color:#698cff;font-weight:bold;transform:scaleX(1.0125);-webkit-text-stroke:0.35px #698cff;">36</span><span class="t" style="left:1503.00px;top:758.66px;font-size:22.60px;color:#698cff;font-weight:bold;transform:scaleX(1.0205);-webkit-text-stroke:0.35px #698cff;">34</span><svg class="a" style="left:1506.00px;top:785.80px;" width="22.8" height="38.1" viewBox="0 0 22.8 38.1"><defs><pattern id="hatch15845" width="3" height="3" patternUnits="userSpaceOnUse" patternTransform="rotate(-35)"><rect width="3" height="1.2" fill="#1f9639"/></pattern></defs><rect x="0.6" y="0.6" width="21.6" height="36.9" rx="3.4" fill="#0a1a0e" stroke="#1f9639" stroke-width="1.2"/><rect x="5.2" y="1.4" width="4.7" height="35.3" fill="url(#hatch15845)" opacity="0.7"/><rect x="14.2" y="1.4" width="3.9" height="35.3" fill="url(#hatch15845)" opacity="0.7"/><line x1="5.2" y1="1" x2="5.2" y2="37.1" stroke="#1f9639" stroke-width="0.9"/><line x1="9.9" y1="1" x2="9.9" y2="37.1" stroke="#1f9639" stroke-width="0.9"/><line x1="14.2" y1="1" x2="14.2" y2="37.1" stroke="#1f9639" stroke-width="0.9"/><line x1="18.1" y1="1" x2="18.1" y2="37.1" stroke="#1f9639" stroke-width="0.9"/><line x1="3.1" y1="3.2" x2="3.1" y2="35.5" stroke="#49c468" stroke-width="1" stroke-dasharray="1.6 1.75"/><line x1="12" y1="3.2" x2="12" y2="35.5" stroke="#49c468" stroke-width="1" stroke-dasharray="1.6 1.75"/><line x1="20.2" y1="3.2" x2="20.2" y2="35.5" stroke="#49c468" stroke-width="1" stroke-dasharray="1.6 1.75"/></svg><div class="a" style="left:880.00px;top:784.00px;width:621.20px;height:41.20px;background:#698cff;border:4px solid #c4b4bc;border-radius:6.5px;box-sizing:border-box;overflow:hidden;"><div class="a" style="left:0;top:0;width:3.9px;height:40px;background:#424242"></div><div class="a" style="left:9.7px;top:0;width:1.2px;height:40px;background:#8fa896"></div><div class="a" style="right:0;top:0;width:2.1px;height:40px;background:#0d0d24"></div></div><span class="t" style="left:884.50px;top:799.14px;font-size:12.00px;color:#ece6ee;transform:scaleX(0.9180);">Slick</span><span class="t" style="left:1174.40px;top:793.19px;font-size:26.00px;color:#e8e2f0;transform:scaleX(0.9009);">37</span><span class="t" style="left:1473.40px;top:799.54px;font-size:12.00px;color:#ece6ee;transform:scaleX(0.9481);">100</span><div class="a" style="left:882.20px;top:829.20px;width:4.80px;height:22.80px;background:#148a2b;border:0.7px solid #2a9a42;"></div><svg class="a" style="left:888.20px;top:827.50px;" width="28" height="26" viewBox="-14 -13 28 26"><circle cx="0" cy="0" r="11.1" fill="none" stroke="#f0ece4" stroke-width="1"/><circle cx="0" cy="0" r="6.2" fill="none" stroke="#f0ece4" stroke-width="1"/><circle cx="0" cy="0" r="4.7" fill="none" stroke="#f0ece4" stroke-width="0.8"/><circle cx="0" cy="0" r="1.1" fill="none" stroke="#f0ece4" stroke-width="0.8"/><path d="M-9 -6.4 q-2.2 -0.6 -3.4 1.2 q-1.4 2 -0.6 3.8 l-0.8 1.4 l0.8 1.4 q-0.8 1.8 0.6 3.8 q1.2 1.8 3.4 1.2" fill="none" stroke="#f0ece4" stroke-width="1"/><path d="M-10.4 -4 q-1.8 1.8 -0.6 4 q-1.2 2.2 0.6 4" fill="none" stroke="#f0ece4" stroke-width="0.8"/></svg><span class="t" style="left:924.80px;top:830.76px;font-size:22.60px;color:#1f9639;font-weight:bold;transform:scaleX(0.9836);-webkit-text-stroke:0.35px #1f9639;">311</span><span class="t" style="left:1468.10px;top:830.76px;font-size:22.60px;color:#f4eee2;font-weight:bold;transform:scaleX(0.9591);-webkit-text-stroke:0.35px #f4eee2;">133</span><svg class="a" style="left:1515.80px;top:829.40px;" width="13.6" height="23.6" viewBox="0 0 13.6 23.6"><circle cx="6.8" cy="7" r="6.1" fill="none" stroke="#f0ece4" stroke-width="1"/><circle cx="6.8" cy="7" r="4.1" fill="none" stroke="#f0ece4" stroke-width="0.9" stroke-dasharray="0.8 1.35"/><path d="M6.4 7.4 L8.6 5.4" stroke="#f0ece4" stroke-width="0.9"/><path d="M5.4 13 h2.8 v2.6 h-2.8z" fill="none" stroke="#f0ece4" stroke-width="0.8"/><path d="M4.5 15.6 h4.8 v2.2 h-4.8z M4.8 18.9 h4.2 v3.3 h-4.2z" fill="#f0ece4"/></svg>
<div class="a" style="left:879.20px;top:856.60px;width:655.80px;height:103.40px;background:#191919;border:1px solid #353533;box-sizing:border-box;"></div><span class="t" style="left:885.70px;top:863.76px;font-size:22.60px;color:#698cff;font-weight:bold;transform:scaleX(1.0125);-webkit-text-stroke:0.35px #698cff;">38</span><span class="t" style="left:1194.70px;top:863.76px;font-size:22.60px;color:#698cff;font-weight:bold;transform:scaleX(1.0045);-webkit-text-stroke:0.35px #698cff;">37</span><span class="t" style="left:1503.20px;top:863.76px;font-size:22.60px;color:#698cff;font-weight:bold;transform:scaleX(1.0125);-webkit-text-stroke:0.35px #698cff;">35</span><svg class="a" style="left:1506.00px;top:890.90px;" width="22.8" height="38.1" viewBox="0 0 22.8 38.1"><defs><pattern id="hatch15950" width="3" height="3" patternUnits="userSpaceOnUse" patternTransform="rotate(-35)"><rect width="3" height="1.2" fill="#1f9639"/></pattern></defs><rect x="0.6" y="0.6" width="21.6" height="36.9" rx="3.4" fill="#0a1a0e" stroke="#1f9639" stroke-width="1.2"/><rect x="5.2" y="1.4" width="4.7" height="35.3" fill="url(#hatch15950)" opacity="0.7"/><rect x="14.2" y="1.4" width="3.9" height="35.3" fill="url(#hatch15950)" opacity="0.7"/><line x1="5.2" y1="1" x2="5.2" y2="37.1" stroke="#1f9639" stroke-width="0.9"/><line x1="9.9" y1="1" x2="9.9" y2="37.1" stroke="#1f9639" stroke-width="0.9"/><line x1="14.2" y1="1" x2="14.2" y2="37.1" stroke="#1f9639" stroke-width="0.9"/><line x1="18.1" y1="1" x2="18.1" y2="37.1" stroke="#1f9639" stroke-width="0.9"/><line x1="3.1" y1="3.2" x2="3.1" y2="35.5" stroke="#49c468" stroke-width="1" stroke-dasharray="1.6 1.75"/><line x1="12" y1="3.2" x2="12" y2="35.5" stroke="#49c468" stroke-width="1" stroke-dasharray="1.6 1.75"/><line x1="20.2" y1="3.2" x2="20.2" y2="35.5" stroke="#49c468" stroke-width="1" stroke-dasharray="1.6 1.75"/></svg><div class="a" style="left:880.00px;top:889.10px;width:621.20px;height:41.20px;background:#698cff;border:4px solid #c4b4bc;border-radius:6.5px;box-sizing:border-box;overflow:hidden;"><div class="a" style="left:0;top:0;width:3.9px;height:40px;background:#424242"></div><div class="a" style="left:9.7px;top:0;width:1.2px;height:40px;background:#8fa896"></div><div class="a" style="right:0;top:0;width:2.1px;height:40px;background:#0d0d24"></div></div><span class="t" style="left:884.50px;top:904.24px;font-size:12.00px;color:#ece6ee;transform:scaleX(0.9180);">Slick</span><span class="t" style="left:1174.40px;top:898.29px;font-size:26.00px;color:#e8e2f0;transform:scaleX(0.9009);">37</span><span class="t" style="left:1473.40px;top:904.64px;font-size:12.00px;color:#ece6ee;transform:scaleX(0.9481);">100</span><div class="a" style="left:882.20px;top:934.30px;width:4.80px;height:22.80px;background:#148a2b;border:0.7px solid #2a9a42;"></div><svg class="a" style="left:888.20px;top:932.60px;" width="28" height="26" viewBox="-14 -13 28 26"><circle cx="0" cy="0" r="11.1" fill="none" stroke="#f0ece4" stroke-width="1"/><circle cx="0" cy="0" r="6.2" fill="none" stroke="#f0ece4" stroke-width="1"/><circle cx="0" cy="0" r="4.7" fill="none" stroke="#f0ece4" stroke-width="0.8"/><circle cx="0" cy="0" r="1.1" fill="none" stroke="#f0ece4" stroke-width="0.8"/><path d="M-9 -6.4 q-2.2 -0.6 -3.4 1.2 q-1.4 2 -0.6 3.8 l-0.8 1.4 l0.8 1.4 q-0.8 1.8 0.6 3.8 q1.2 1.8 3.4 1.2" fill="none" stroke="#f0ece4" stroke-width="1"/><path d="M-10.4 -4 q-1.8 1.8 -0.6 4 q-1.2 2.2 0.6 4" fill="none" stroke="#f0ece4" stroke-width="0.8"/></svg><span class="t" style="left:924.80px;top:935.86px;font-size:22.60px;color:#1f9639;font-weight:bold;transform:scaleX(1.0121);-webkit-text-stroke:0.35px #1f9639;">227</span><span class="t" style="left:1468.10px;top:935.86px;font-size:22.60px;color:#f4eee2;font-weight:bold;transform:scaleX(0.9591);-webkit-text-stroke:0.35px #f4eee2;">133</span><svg class="a" style="left:1515.80px;top:934.50px;" width="13.6" height="23.6" viewBox="0 0 13.6 23.6"><circle cx="6.8" cy="7" r="6.1" fill="none" stroke="#f0ece4" stroke-width="1"/><circle cx="6.8" cy="7" r="4.1" fill="none" stroke="#f0ece4" stroke-width="0.9" stroke-dasharray="0.8 1.35"/><path d="M6.4 7.4 L8.6 5.4" stroke="#f0ece4" stroke-width="0.9"/><path d="M5.4 13 h2.8 v2.6 h-2.8z" fill="none" stroke="#f0ece4" stroke-width="0.8"/><path d="M4.5 15.6 h4.8 v2.2 h-4.8z M4.8 18.9 h4.2 v3.3 h-4.2z" fill="#f0ece4"/></svg>
<svg class="a" style="left:1.30px;top:980.20px;" width="20" height="20" viewBox="-10 -10 20 20"><circle cx="0" cy="0" r="8.6" fill="#fff"/><path d="M-3.6 -1.8 L0 1.8 L3.6 -1.8" fill="none" stroke="#222" stroke-width="1.9"/></svg>
<div class="a" style="left:25.00px;top:968.80px;width:98.80px;height:42.00px;border:1px solid #5e5e5e;box-sizing:border-box;background:#1a1a1a;"></div>
<span class="t" style="left:26.60px;top:983.27px;font-size:14.80px;color:#ece6da;transform:scaleX(0.9785);">Replay Control</span>
<div class="a" style="left:1547.00px;top:618.00px;width:344.00px;height:10.00px;background:#0a0a0a;"></div>
<div class="a" style="left:1545.50px;top:622.80px;width:346.00px;height:2.20px;background:#484846;"></div>
<div class="a" style="left:1545.20px;top:627.00px;width:349.00px;height:385.20px;border:2.8px solid #8c8c8c;border-radius:6px 0 0 6px;box-sizing:border-box;background:#0a0a0a;"></div>
<div class="a" style="left:1548.70px;top:629.60px;width:28.00px;height:29.00px;background:#1d1c1a;border-radius:0 0 5px 0;"></div>
<div class="a" style="left:1548.70px;top:630.00px;width:25.00px;height:25.60px;background:#3a3732;"></div>
<svg class="a" style="left:1555.40px;top:636.80px;" width="12" height="12" viewBox="0 0 12 12"><rect x="1.2" y="4.2" width="6.3" height="6.3" rx="0.3" fill="none" stroke="#f0e8dc" stroke-width="1.5"/><path d="M4.6 3.9 V1.2 H10.9 V7.6 H8" fill="none" stroke="#f0e8dc" stroke-width="1.5"/><path d="M7.4 2.9 h1.8 v1.8" fill="none" stroke="#f0e8dc" stroke-width="0.9"/></svg>
<svg class="a" style="left:1550.00px;top:630.00px;" width="341" height="306" viewBox="1550 630 341 306"><path d="M1781.6 805.0 C1781.0 804.3 1784.4 807.6 1778.0 800.9 C1771.6 794.2 1751.6 773.5 1743.2 765.0 C1734.8 756.5 1733.8 756.5 1727.4 750.0 C1721.0 743.5 1710.6 731.7 1705.0 725.7 C1699.4 719.8 1697.2 717.9 1693.7 714.3 C1690.2 710.7 1687.1 707.4 1683.8 703.9 C1680.5 700.4 1677.3 696.7 1674.0 693.5 C1670.7 690.3 1667.4 687.4 1664.1 684.7 C1660.8 682.0 1657.5 679.4 1654.2 677.2 C1650.9 675.0 1647.6 672.9 1644.3 671.3 C1641.0 669.7 1637.7 668.6 1634.4 667.8 C1631.1 667.0 1627.8 666.6 1624.5 666.7 C1621.2 666.8 1617.7 667.4 1614.7 668.3 C1611.7 669.1 1609.2 670.2 1606.7 671.8 C1604.2 673.4 1601.5 675.7 1599.8 677.7 C1598.1 679.7 1597.2 681.7 1596.4 683.7 C1595.6 685.7 1595.3 687.5 1595.2 689.6 C1595.1 691.7 1595.3 694.2 1595.7 696.5 C1596.1 698.8 1596.9 700.9 1597.8 703.4 C1598.7 705.9 1600.0 708.3 1601.3 711.3 C1602.6 714.3 1604.2 717.7 1605.8 721.2 C1607.4 724.7 1609.3 729.0 1610.7 732.1 C1612.1 735.2 1613.6 738.7 1614.2 740.0" fill="none" stroke="#b49f7a" stroke-width="2"/><path d="M1614.2 740.0 C1614.5 740.9 1614.8 742.5 1616.2 745.5 C1617.6 748.5 1620.3 753.9 1622.4 758.3 C1624.5 762.7 1626.8 767.0 1629.0 771.7 C1631.2 776.4 1633.5 781.7 1635.7 786.4 C1637.9 791.1 1640.6 795.7 1642.4 799.7 C1644.2 803.7 1645.1 806.6 1646.4 810.4 C1647.7 814.2 1649.1 818.8 1650.4 822.4 C1651.7 826.0 1652.9 828.6 1654.4 831.7 C1656.0 834.8 1657.7 838.1 1659.7 841.1 C1661.7 844.1 1664.0 847.0 1666.4 849.7 C1668.9 852.4 1671.5 854.9 1674.4 857.1 C1677.3 859.3 1680.6 861.5 1683.7 863.1 C1686.8 864.7 1690.2 865.9 1693.1 866.7 C1696.0 867.5 1698.6 867.9 1701.1 868.0 C1703.5 868.1 1705.7 867.8 1707.8 867.1 C1709.9 866.4 1712.1 865.2 1713.8 863.8 C1715.5 862.3 1716.8 860.2 1717.8 858.4 C1718.8 856.6 1718.9 855.0 1719.8 853.1 C1720.7 851.2 1721.7 848.8 1723.1 847.1 C1724.5 845.4 1726.2 844.2 1728.4 843.1 C1730.6 842.0 1733.5 840.9 1736.1 840.5 C1738.7 840.1 1741.1 840.4 1744.0 840.9 C1746.9 841.4 1750.1 842.2 1753.5 843.3 C1756.9 844.4 1762.7 847.0 1764.5 847.7" fill="none" stroke="#729f99" stroke-width="2"/><path d="M1764.5 847.7 C1766.1 848.2 1770.6 849.8 1774.0 850.9 C1777.4 852.0 1781.7 853.1 1785.1 854.3 C1788.5 855.5 1791.4 856.6 1794.6 858.3 C1797.8 860.0 1801.2 862.2 1804.1 864.6 C1807.0 867.0 1809.6 869.7 1812.0 872.5 C1814.4 875.3 1816.3 878.3 1818.3 881.2 C1820.3 884.1 1821.7 887.3 1823.8 889.9 C1825.9 892.5 1828.4 895.5 1830.9 897.0 C1833.4 898.5 1836.2 899.2 1838.8 899.1 C1841.4 899.0 1844.7 897.5 1846.7 896.2 C1848.7 894.9 1849.9 893.2 1850.7 891.5 C1851.5 889.8 1851.8 888.1 1851.5 886.0 C1851.2 883.9 1850.0 880.9 1849.1 878.9 C1848.2 876.9 1847.6 876.2 1845.9 874.1 C1844.2 872.0 1841.8 869.5 1838.8 866.2 C1835.8 862.9 1833.6 860.5 1827.8 854.3 C1822.0 848.1 1811.8 837.3 1804.1 829.1 C1796.4 820.9 1785.3 809.0 1781.6 805.0" fill="none" stroke="#8567a6" stroke-width="2"/><path d="M1744 765.8 L1778 800.6" stroke="#1e963c" stroke-width="8.7"/><circle cx="1849.1" cy="878.9" r="4.9" fill="#202020" stroke="#c22e50" stroke-width="2.2"/><path d="M1850.6 882.4 h-2.1 v-5 l-1.7 0.9 l-0.4 -1.6 l2.4 -1.4 h1.8z" fill="#fff"/></svg>
<div class="a" style="left:1548.00px;top:935.80px;width:346.00px;height:73.00px;background:#4a463e;border:1.3px solid #d4d0c4;box-sizing:border-box;"></div>
<div class="a" style="left:1549.50px;top:937.50px;width:35.00px;height:41.10px;background:#141414;border-radius:6px;"></div>
<div class="a" style="left:1553.90px;top:942.00px;width:26.10px;height:32.20px;background:#4a463e;"></div>
<svg class="a" style="left:1549.00px;top:937.00px;" width="40" height="44" viewBox="1549 937 40 44"><path d="M1561.6 955.6 A7 7 0 1 1 1567.6 964.9" fill="none" stroke="#f0e8dc" stroke-width="2"/><path d="M1559.8 950.7 V956.3 H1565" fill="none" stroke="#f0e8dc" stroke-width="2"/></svg>
<div class="a" style="left:1591.80px;top:952.60px;width:12.40px;height:12.40px;background:#fff;"><svg width="12" height="12" viewBox="0 0 13 13" style="position:absolute;left:0;top:0"><path d="M2.6 6.6 L5.3 9.6 L10.6 3" fill="none" stroke="#111" stroke-width="2.1"/></svg></div>
<span class="t" style="left:1610.80px;top:951.89px;font-size:14.30px;color:#ece6da;">Color Sectors</span>
<div class="a" style="left:1754.50px;top:952.60px;width:12.40px;height:12.40px;background:#fff;"></div>
<span class="t" style="left:1773.60px;top:951.89px;font-size:14.30px;color:#ece6da;transform:scaleX(1.0284);">Show All</span>
<div class="a" style="left:1556.00px;top:987.00px;width:12.40px;height:12.40px;background:#fff;"></div>
<span class="t" style="left:1575.00px;top:986.49px;font-size:14.30px;color:#ece6da;transform:scaleX(1.0397);">Throttle</span>
<div class="a" style="left:1638.00px;top:987.00px;width:12.40px;height:12.40px;background:#fff;"></div>
<span class="t" style="left:1656.20px;top:986.49px;font-size:14.30px;color:#ece6da;transform:scaleX(0.9646);">Brake</span>
<div class="a" style="left:1705.00px;top:987.00px;width:12.40px;height:12.40px;background:#fff;"></div>
<span class="t" style="left:1722.80px;top:986.49px;font-size:14.30px;color:#ece6da;transform:scaleX(1.0261);">Clutch</span>
<div class="a" style="left:1776.80px;top:987.00px;width:12.40px;height:12.40px;background:#fff;"></div>
<span class="t" style="left:1795.20px;top:986.49px;font-size:14.30px;color:#ece6da;transform:scaleX(1.0172);">Shift Points</span>
</body></html>
